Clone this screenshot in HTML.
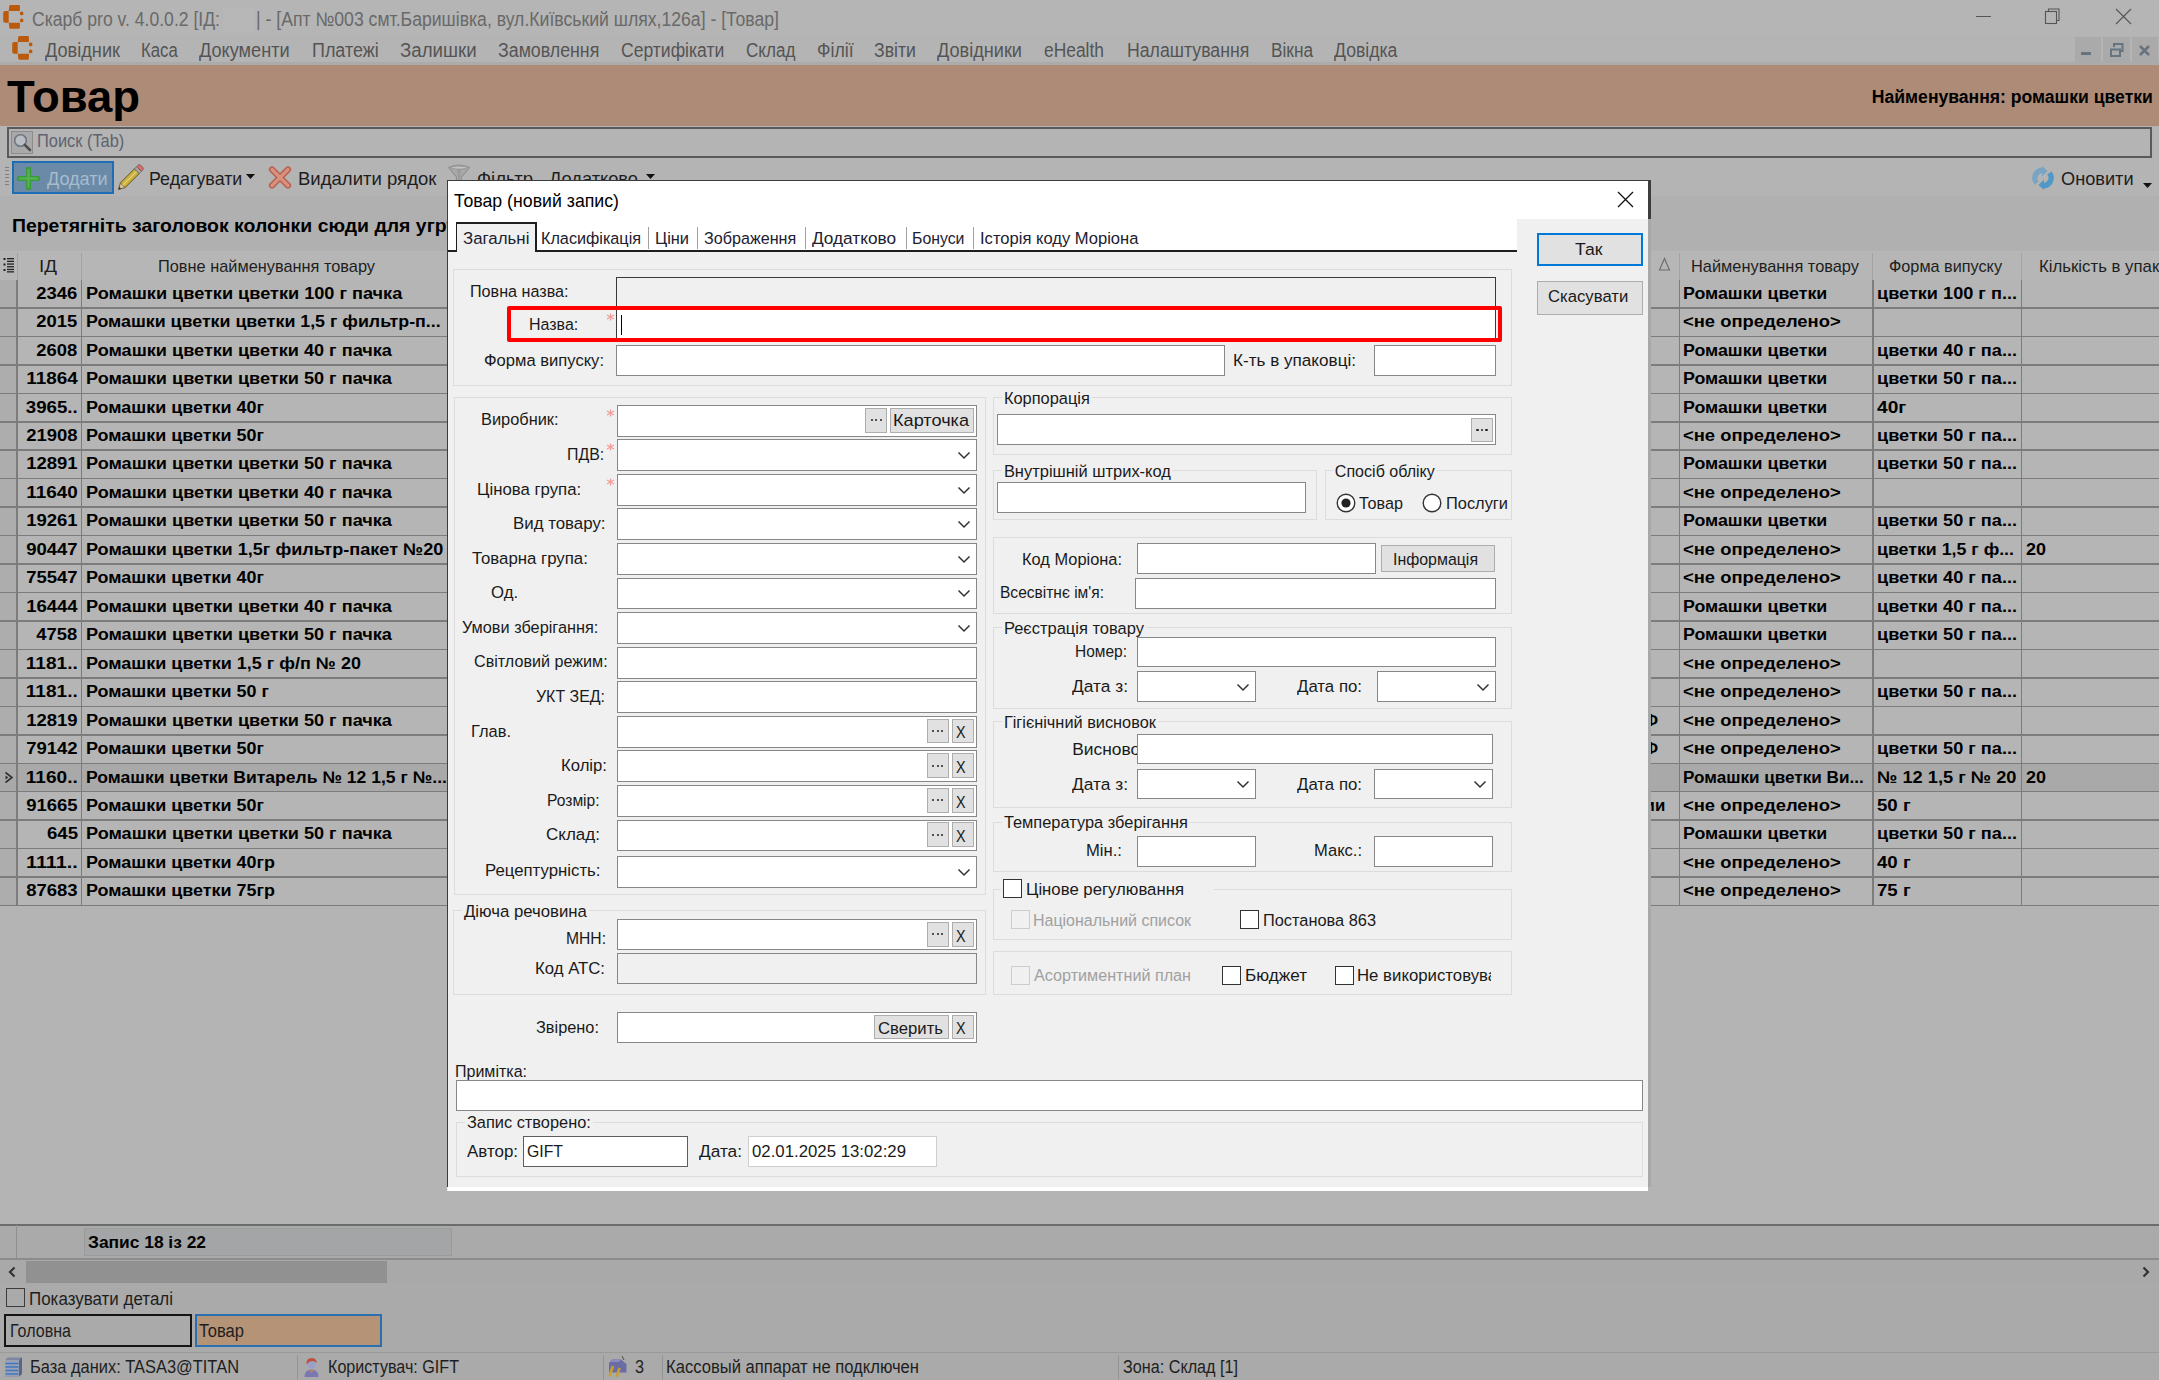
<!DOCTYPE html>
<html><head><meta charset="utf-8"><title>Товар</title>
<style>
html,body{margin:0;padding:0;}
body{width:2159px;height:1380px;overflow:hidden;position:relative;background:#b4b4b4;font-family:"Liberation Sans", sans-serif;}
.a{position:absolute;}
.t{white-space:nowrap;}
</style></head><body>
<div class="a" style="left:0px;top:0px;width:2159px;height:35px;background:#b5b5b5;"></div>
<svg class="a" style="left:2px;top:4px" width="24" height="26" viewBox="0 0 24 26"><g fill="#b95a0c"><path d="M7.3 2 Q7.3 0.9 8.6 0.9 H16.6 Q17.9 0.9 17.9 2 L17.9 6.9 H6.7 Z"/><path d="M6.7 6.9 V18.7 H3.2 Q1.2 18.7 1.2 16.7 V8.9 Q1.2 6.9 3.2 6.9 Z"/><path d="M6.7 18.7 H17.9 V23.6 Q17.9 24.8 16.6 24.8 H8.6 Q7.3 24.8 7.3 23.6 Z"/><rect x="17.9" y="7.4" width="3.5" height="3.9" rx="1.6"/><rect x="17.9" y="14.6" width="3.5" height="3.7" rx="1.6"/></g></svg>
<div class="a t" id="t1" style="top:10.00px;font-size:19.5px;line-height:19.5px;font-weight:normal;color:#696969;left:32px;transform:scaleX(0.9013);transform-origin:0 0;">Скарб pro v. 4.0.0.2 [ІД:</div>
<div class="a" style="left:223px;top:8px;width:31px;height:24px;background:#b7b7b7;"></div>
<div class="a t" id="t2" style="top:10.00px;font-size:19.5px;line-height:19.5px;font-weight:normal;color:#696969;left:256px;transform:scaleX(0.9039);transform-origin:0 0;">| - [Апт №003 смт.Баришівка, вул.Київський шлях,126а] - [Товар]</div>
<div class="a" style="left:1976px;top:16px;width:15px;height:1.2px;background:#555;"></div>
<svg class="a" style="left:2040px;top:6px" width="26" height="22" viewBox="0 0 26 22"><rect x="5.5" y="5.5" width="11" height="12" fill="none" stroke="#555" stroke-width="1.1"/><path d="M8.5 5.5 v-2.5 h10.5 v11.5 h-2.5" fill="none" stroke="#555" stroke-width="1.1"/></svg>
<svg class="a" style="left:2112px;top:5px" width="24" height="24" viewBox="0 0 24 24"><path d="M4 4 L19 19 M19 4 L4 19" stroke="#555" stroke-width="1.1"/></svg>
<div class="a" style="left:0px;top:35px;width:2159px;height:30px;background:#b4b4b4;"></div>
<div class="a" style="left:0px;top:62px;width:2159px;height:3px;background:#ababab;"></div>
<svg class="a" style="left:10.6px;top:35.1px" width="24" height="26" viewBox="0 0 24 26"><g fill="#b95a0c"><path d="M7.3 2 Q7.3 0.9 8.6 0.9 H16.6 Q17.9 0.9 17.9 2 L17.9 6.9 H6.7 Z"/><path d="M6.7 6.9 V18.7 H3.2 Q1.2 18.7 1.2 16.7 V8.9 Q1.2 6.9 3.2 6.9 Z"/><path d="M6.7 18.7 H17.9 V23.6 Q17.9 24.8 16.6 24.8 H8.6 Q7.3 24.8 7.3 23.6 Z"/><rect x="17.9" y="7.4" width="3.5" height="3.9" rx="1.6"/><rect x="17.9" y="14.6" width="3.5" height="3.7" rx="1.6"/></g></svg>
<div class="a t" id="t3" style="top:41.00px;font-size:19.5px;line-height:19.5px;font-weight:normal;color:#545454;left:45px;transform:scaleX(0.9311);transform-origin:0 0;">Довідник</div>
<div class="a t" id="t4" style="top:41.00px;font-size:19.5px;line-height:19.5px;font-weight:normal;color:#545454;left:141px;transform:scaleX(0.8572);transform-origin:0 0;">Каса</div>
<div class="a t" id="t5" style="top:41.00px;font-size:19.5px;line-height:19.5px;font-weight:normal;color:#545454;left:199.3px;transform:scaleX(0.9312);transform-origin:0 0;">Документи</div>
<div class="a t" id="t6" style="top:41.00px;font-size:19.5px;line-height:19.5px;font-weight:normal;color:#545454;left:312.3px;transform:scaleX(0.9196);transform-origin:0 0;">Платежі</div>
<div class="a t" id="t7" style="top:41.00px;font-size:19.5px;line-height:19.5px;font-weight:normal;color:#545454;left:400px;transform:scaleX(0.9591);transform-origin:0 0;">Залишки</div>
<div class="a t" id="t8" style="top:41.00px;font-size:19.5px;line-height:19.5px;font-weight:normal;color:#545454;left:497.7px;transform:scaleX(0.9117);transform-origin:0 0;">Замовлення</div>
<div class="a t" id="t9" style="top:41.00px;font-size:19.5px;line-height:19.5px;font-weight:normal;color:#545454;left:620.7px;transform:scaleX(0.9002);transform-origin:0 0;">Сертифікати</div>
<div class="a t" id="t10" style="top:41.00px;font-size:19.5px;line-height:19.5px;font-weight:normal;color:#545454;left:745.6px;transform:scaleX(0.8753);transform-origin:0 0;">Склад</div>
<div class="a t" id="t11" style="top:41.00px;font-size:19.5px;line-height:19.5px;font-weight:normal;color:#545454;left:816.5px;transform:scaleX(0.9107);transform-origin:0 0;">Філії</div>
<div class="a t" id="t12" style="top:41.00px;font-size:19.5px;line-height:19.5px;font-weight:normal;color:#545454;left:874px;transform:scaleX(0.9072);transform-origin:0 0;">Звіти</div>
<div class="a t" id="t13" style="top:41.00px;font-size:19.5px;line-height:19.5px;font-weight:normal;color:#545454;left:937px;transform:scaleX(0.9296);transform-origin:0 0;">Довідники</div>
<div class="a t" id="t14" style="top:41.00px;font-size:19.5px;line-height:19.5px;font-weight:normal;color:#545454;left:1044.4px;transform:scaleX(0.8926);transform-origin:0 0;">eHealth</div>
<div class="a t" id="t15" style="top:41.00px;font-size:19.5px;line-height:19.5px;font-weight:normal;color:#545454;left:1126.7px;transform:scaleX(0.9074);transform-origin:0 0;">Налаштування</div>
<div class="a t" id="t16" style="top:41.00px;font-size:19.5px;line-height:19.5px;font-weight:normal;color:#545454;left:1270.6px;transform:scaleX(0.8866);transform-origin:0 0;">Вікна</div>
<div class="a t" id="t17" style="top:41.00px;font-size:19.5px;line-height:19.5px;font-weight:normal;color:#545454;left:1334px;transform:scaleX(0.9037);transform-origin:0 0;">Довідка</div>
<div class="a" style="left:2074.5px;top:36.6px;width:26.7px;height:26.4px;background:#aaaaaa;"></div>
<div class="a" style="left:2103px;top:36.6px;width:26.7px;height:26.4px;background:#aaaaaa;"></div>
<div class="a" style="left:2131.5px;top:36.6px;width:26.7px;height:26.4px;background:#aaaaaa;"></div>
<div class="a" style="left:2081px;top:52px;width:10px;height:3px;background:#67737d;"></div>
<svg class="a" style="left:2103px;top:37px" width="27" height="26" viewBox="0 0 27 26"><rect x="8" y="12.5" width="9" height="6.5" fill="none" stroke="#67737d" stroke-width="2"/><path d="M11 10 v-3 h8.5 v7 h-2.5" fill="none" stroke="#67737d" stroke-width="2"/></svg>
<svg class="a" style="left:2131px;top:37px" width="27" height="26" viewBox="0 0 27 26"><path d="M9 9 L18 18 M18 9 L9 18" stroke="#67737d" stroke-width="2.6"/></svg>
<div class="a" style="left:0px;top:65px;width:2159px;height:61px;background:#ae8b77;"></div>
<div class="a t" id="t18" style="top:74.00px;font-size:45px;line-height:45px;font-weight:bold;color:#000;left:7px;transform:scaleX(1.0096);transform-origin:0 0;">Товар</div>
<div class="a t" id="t19" style="top:88.00px;font-size:18px;line-height:18px;font-weight:bold;color:#000;right:6.400000000000091px;transform:scaleX(0.9762);transform-origin:100% 0;">Найменування: ромашки цветки</div>
<div class="a" style="left:7.3px;top:126.5px;width:2145px;height:31px;border:2px solid #5a5a5a;box-sizing:border-box;"></div>
<div class="a" style="left:11px;top:130.7px;width:22.3px;height:23.3px;background:#a9a9a9;border:1px solid #8c8c8c;box-sizing:border-box;"></div>
<svg class="a" style="left:12px;top:132px" width="21" height="21" viewBox="0 0 21 21"><circle cx="8.5" cy="8.5" r="5.8" fill="#b9bdc4" stroke="#6e7680" stroke-width="1.6"/><path d="M12.8 12.8 L18 18" stroke="#4d4d4d" stroke-width="2.6" stroke-linecap="round"/></svg>
<div class="a t" id="t20" style="top:131.00px;font-size:19px;line-height:19px;font-weight:normal;color:#5f6270;left:36.7px;transform:scaleX(0.8625);transform-origin:0 0;">Поиск (Tab)</div>
<div class="a" style="left:4.5px;top:166.5px;width:4px;height:1.3px;background:#7e7e7e;"></div>
<div class="a" style="left:4.5px;top:170.0px;width:4px;height:1.3px;background:#7e7e7e;"></div>
<div class="a" style="left:4.5px;top:173.5px;width:4px;height:1.3px;background:#7e7e7e;"></div>
<div class="a" style="left:4.5px;top:177.0px;width:4px;height:1.3px;background:#7e7e7e;"></div>
<div class="a" style="left:4.5px;top:180.5px;width:4px;height:1.3px;background:#7e7e7e;"></div>
<div class="a" style="left:4.5px;top:184.0px;width:4px;height:1.3px;background:#7e7e7e;"></div>
<div class="a" style="left:11.8px;top:161px;width:102.2px;height:32.8px;background:#6a8aa8;border:2px solid #1f6db5;box-sizing:border-box;"></div>
<svg class="a" style="left:17px;top:167px" width="23" height="23" viewBox="0 0 23 23"><path d="M11.5 2 V21 M2 11.5 H21" stroke="#3a9a3a" stroke-width="5" stroke-linecap="round"/><path d="M11.5 3 V20 M3 11.5 H20" stroke="#53b353" stroke-width="2.4" stroke-linecap="round"/></svg>
<div class="a t" id="t21" style="top:169.00px;font-size:19px;line-height:19px;font-weight:normal;color:#a7bccd;left:46.7px;transform:scaleX(0.9499);transform-origin:0 0;">Додати</div>
<svg class="a" style="left:116px;top:163px" width="30" height="30" viewBox="0 0 30 30"><g transform="translate(14.5 14.5) rotate(-45)"><path d="M-17 0 L-11 -3.3 H9 V3.3 H-11 Z" fill="#d9c39a" stroke="#6e5a3a" stroke-width="0.9"/><path d="M-17 0 L-14.5 -1.4 V1.4 Z" fill="#333"/><rect x="-11" y="-3.3" width="20" height="6.6" fill="#c9b040" stroke="#6e6230" stroke-width="0.9"/><rect x="-11" y="-0.6" width="20" height="1.2" fill="#e3d070"/><rect x="9" y="-3.3" width="3" height="6.6" fill="#a8a8a8" stroke="#666" stroke-width="0.8"/><rect x="12" y="-3.3" width="3.8" height="6.6" rx="1.4" fill="#d07070" stroke="#8a4a4a" stroke-width="0.8"/></g></svg>
<div class="a t" id="t22" style="top:169.00px;font-size:19px;line-height:19px;font-weight:normal;color:#1e1e1e;left:149px;transform:scaleX(0.9384);transform-origin:0 0;">Редагувати</div>
<svg class="a" style="left:246px;top:174px" width="10" height="6" viewBox="0 0 10 6"><path d="M0 0 H9 L4.5 5 Z" fill="#111"/></svg>
<svg class="a" style="left:267px;top:165px" width="26" height="25" viewBox="0 0 26 25"><path d="M5 4.5 L21 20.5 M21 4.5 L5 20.5" stroke="#b8604e" stroke-width="6.2" stroke-linecap="round"/><path d="M5 4.5 L21 20.5 M21 4.5 L5 20.5" stroke="#d9907e" stroke-width="3.2" stroke-linecap="round"/></svg>
<div class="a t" id="t23" style="top:169.00px;font-size:19px;line-height:19px;font-weight:normal;color:#1e1e1e;left:298.3px;transform:scaleX(0.9757);transform-origin:0 0;">Видалити рядок</div>
<svg class="a" style="left:447px;top:164px" width="24" height="18" viewBox="0 0 24 18"><path d="M1.5 3.5 Q12 -1.5 22.5 3.5 L14.5 13 V18 H9.5 V13 Z" fill="#a9a9a9" stroke="#8f8f8f" stroke-width="1.1"/><ellipse cx="12" cy="3.6" rx="8" ry="1.6" fill="#c2c2c2" stroke="#8a8a8a" stroke-width="0.8"/><path d="M10.5 6 H13.5 L12.8 16 H11.2 Z" fill="#9a9a9a"/></svg>
<div class="a t" id="t24" style="top:169.00px;font-size:19px;line-height:19px;font-weight:normal;color:#1e1e1e;left:476.7px;transform:scaleX(0.9750);transform-origin:0 0;">Фільтр</div>
<div class="a t" id="t25" style="top:169.00px;font-size:19px;line-height:19px;font-weight:normal;color:#1e1e1e;left:549.3px;transform:scaleX(0.9599);transform-origin:0 0;">Додатково</div>
<svg class="a" style="left:646px;top:174px" width="10" height="6" viewBox="0 0 10 6"><path d="M0 0 H9 L4.5 5 Z" fill="#111"/></svg>
<svg class="a" style="left:2031px;top:166px" width="24" height="24" viewBox="0 0 24 24"><path d="M12 1.5 A10.5 10.5 0 0 0 3.5 18.5 L7.8 15.5 A5.2 5.2 0 0 1 11 7 V10.5 L16.5 5 L11 0 V1.5 Z" fill="#7aa4c4"/><path d="M12 22.5 A10.5 10.5 0 0 0 20.5 5.5 L16.2 8.5 A5.2 5.2 0 0 1 13 17 V13.5 L7.5 19 L13 24 V22.5 Z" fill="#4f98c8"/></svg>
<div class="a t" id="t26" style="top:169.00px;font-size:19px;line-height:19px;font-weight:normal;color:#1e1e1e;left:2061px;transform:scaleX(0.9568);transform-origin:0 0;">Оновити</div>
<svg class="a" style="left:2143px;top:183px" width="10" height="6" viewBox="0 0 10 6"><path d="M0 0 H9 L4.5 5 Z" fill="#111"/></svg>
<div class="a" style="left:0px;top:196px;width:2159px;height:54.80000000000001px;background:#b0b0b0;"></div>
<div class="a t" id="t27" style="top:217.00px;font-size:18.2px;line-height:18.2px;font-weight:bold;color:#000;left:12.3px;transform:scaleX(1.0678);transform-origin:0 0;">Перетягніть заголовок колонки сюди для угруповання</div>
<div class="a" style="left:0px;top:250.8px;width:2159px;height:28.80000000000001px;background:#b6b6b6;"></div>
<div class="a" style="left:16.5px;top:252.8px;width:1.3px;height:26.80000000000001px;background:#a3a3a3;"></div>
<div class="a" style="left:80.9px;top:252.8px;width:1.3px;height:26.80000000000001px;background:#a3a3a3;"></div>
<div class="a" style="left:1679.0px;top:252.8px;width:1.3px;height:26.80000000000001px;background:#a3a3a3;"></div>
<div class="a" style="left:1872.2px;top:252.8px;width:1.3px;height:26.80000000000001px;background:#a3a3a3;"></div>
<div class="a" style="left:2020.7px;top:252.8px;width:1.3px;height:26.80000000000001px;background:#a3a3a3;"></div>
<svg class="a" style="left:3px;top:257px" width="12" height="16" viewBox="0 0 12 16"><g fill="#222"><rect x="0.5" y="1" width="2" height="2"/><rect x="0.5" y="6.5" width="2" height="2"/><rect x="0.5" y="12" width="2" height="2"/><rect x="4" y="1" width="7" height="1.3"/><rect x="4" y="3.7" width="7" height="1.3"/><rect x="4" y="6.4" width="7" height="1.3"/><rect x="4" y="9.1" width="7" height="1.3"/><rect x="4" y="11.8" width="7" height="1.3"/><rect x="4" y="14.2" width="7" height="1.3"/></g></svg>
<div class="a t" id="t28" style="top:258.00px;font-size:17px;line-height:17px;font-weight:normal;color:#1e1e1e;left:39px;transform:scaleX(1.1077);transform-origin:0 0;">ІД</div>
<div class="a t" id="t29" style="top:258.00px;font-size:17px;line-height:17px;font-weight:normal;color:#1e1e1e;left:157.8px;transform:scaleX(0.9612);transform-origin:0 0;">Повне найменування товару</div>
<svg class="a" style="left:1658px;top:257px" width="13" height="15" viewBox="0 0 13 15"><path d="M6.5 1.5 L11.5 13 H1.5 Z" fill="none" stroke="#6a6a6a" stroke-width="1.1"/></svg>
<div class="a t" id="t30" style="top:258.00px;font-size:17px;line-height:17px;font-weight:normal;color:#1e1e1e;left:1690.8px;transform:scaleX(0.9634);transform-origin:0 0;">Найменування товару</div>
<div class="a t" id="t31" style="top:258.00px;font-size:17px;line-height:17px;font-weight:normal;color:#1e1e1e;left:1889px;transform:scaleX(0.9546);transform-origin:0 0;">Форма випуску</div>
<div class="a t" id="t32" style="top:258.00px;font-size:17px;line-height:17px;font-weight:normal;color:#1e1e1e;left:2038.5px;transform:scaleX(0.9864);transform-origin:0 0;">Кількість в упаковці</div>
<div class="a" style="left:0px;top:279.6px;width:2159px;height:28.46px;background:#b5b5b5;"></div>
<div class="a" style="left:0px;top:279.6px;width:17px;height:28.46px;background:#adadad;"></div>
<div class="a" style="left:0px;top:308.06px;width:2159px;height:28.46px;background:#b5b5b5;"></div>
<div class="a" style="left:0px;top:308.06px;width:17px;height:28.46px;background:#adadad;"></div>
<div class="a" style="left:0px;top:336.52000000000004px;width:2159px;height:28.46px;background:#b5b5b5;"></div>
<div class="a" style="left:0px;top:336.52000000000004px;width:17px;height:28.46px;background:#adadad;"></div>
<div class="a" style="left:0px;top:364.98px;width:2159px;height:28.46px;background:#b5b5b5;"></div>
<div class="a" style="left:0px;top:364.98px;width:17px;height:28.46px;background:#adadad;"></div>
<div class="a" style="left:0px;top:393.44000000000005px;width:2159px;height:28.46px;background:#b5b5b5;"></div>
<div class="a" style="left:0px;top:393.44000000000005px;width:17px;height:28.46px;background:#adadad;"></div>
<div class="a" style="left:0px;top:421.90000000000003px;width:2159px;height:28.46px;background:#b5b5b5;"></div>
<div class="a" style="left:0px;top:421.90000000000003px;width:17px;height:28.46px;background:#adadad;"></div>
<div class="a" style="left:0px;top:450.36px;width:2159px;height:28.46px;background:#b5b5b5;"></div>
<div class="a" style="left:0px;top:450.36px;width:17px;height:28.46px;background:#adadad;"></div>
<div class="a" style="left:0px;top:478.82000000000005px;width:2159px;height:28.46px;background:#b5b5b5;"></div>
<div class="a" style="left:0px;top:478.82000000000005px;width:17px;height:28.46px;background:#adadad;"></div>
<div class="a" style="left:0px;top:507.28000000000003px;width:2159px;height:28.46px;background:#b5b5b5;"></div>
<div class="a" style="left:0px;top:507.28000000000003px;width:17px;height:28.46px;background:#adadad;"></div>
<div class="a" style="left:0px;top:535.74px;width:2159px;height:28.46px;background:#b5b5b5;"></div>
<div class="a" style="left:0px;top:535.74px;width:17px;height:28.46px;background:#adadad;"></div>
<div class="a" style="left:0px;top:564.2px;width:2159px;height:28.46px;background:#b5b5b5;"></div>
<div class="a" style="left:0px;top:564.2px;width:17px;height:28.46px;background:#adadad;"></div>
<div class="a" style="left:0px;top:592.6600000000001px;width:2159px;height:28.46px;background:#b5b5b5;"></div>
<div class="a" style="left:0px;top:592.6600000000001px;width:17px;height:28.46px;background:#adadad;"></div>
<div class="a" style="left:0px;top:621.12px;width:2159px;height:28.46px;background:#b5b5b5;"></div>
<div class="a" style="left:0px;top:621.12px;width:17px;height:28.46px;background:#adadad;"></div>
<div class="a" style="left:0px;top:649.58px;width:2159px;height:28.46px;background:#b5b5b5;"></div>
<div class="a" style="left:0px;top:649.58px;width:17px;height:28.46px;background:#adadad;"></div>
<div class="a" style="left:0px;top:678.04px;width:2159px;height:28.46px;background:#b5b5b5;"></div>
<div class="a" style="left:0px;top:678.04px;width:17px;height:28.46px;background:#adadad;"></div>
<div class="a" style="left:0px;top:706.5px;width:2159px;height:28.46px;background:#b5b5b5;"></div>
<div class="a" style="left:0px;top:706.5px;width:17px;height:28.46px;background:#adadad;"></div>
<div class="a" style="left:0px;top:734.96px;width:2159px;height:28.46px;background:#b5b5b5;"></div>
<div class="a" style="left:0px;top:734.96px;width:17px;height:28.46px;background:#adadad;"></div>
<div class="a" style="left:0px;top:763.4200000000001px;width:2159px;height:28.46px;background:#a9a9a9;"></div>
<div class="a" style="left:0px;top:763.4200000000001px;width:17px;height:28.46px;background:#a9a9a9;"></div>
<div class="a" style="left:0px;top:791.88px;width:2159px;height:28.46px;background:#b5b5b5;"></div>
<div class="a" style="left:0px;top:791.88px;width:17px;height:28.46px;background:#adadad;"></div>
<div class="a" style="left:0px;top:820.34px;width:2159px;height:28.46px;background:#b5b5b5;"></div>
<div class="a" style="left:0px;top:820.34px;width:17px;height:28.46px;background:#adadad;"></div>
<div class="a" style="left:0px;top:848.8000000000001px;width:2159px;height:28.46px;background:#b5b5b5;"></div>
<div class="a" style="left:0px;top:848.8000000000001px;width:17px;height:28.46px;background:#adadad;"></div>
<div class="a" style="left:0px;top:877.26px;width:2159px;height:28.46px;background:#b5b5b5;"></div>
<div class="a" style="left:0px;top:877.26px;width:17px;height:28.46px;background:#adadad;"></div>
<div class="a t" id="t33" style="top:286.00px;font-size:16.8px;line-height:16.8px;font-weight:bold;color:#000;right:2081.2px;transform:scaleX(1.0979);transform-origin:100% 0;">2346</div>
<div class="a t" id="t34" style="top:286.00px;font-size:16.8px;line-height:16.8px;font-weight:bold;color:#000;left:86.1px;transform:scaleX(1.0803);transform-origin:0 0;">Ромашки цветки цветки 100 г пачка</div>
<div class="a t" id="t35" style="top:286.00px;font-size:16.8px;line-height:16.8px;font-weight:bold;color:#000;left:1683.3px;transform:scaleX(1.0598);transform-origin:0 0;">Ромашки цветки</div>
<div class="a t" id="t36" style="top:286.00px;font-size:16.8px;line-height:16.8px;font-weight:bold;color:#000;left:1877.4px;transform:scaleX(1.0806);transform-origin:0 0;">цветки 100 г п...</div>
<div class="a" style="left:0px;top:307.16px;width:2159px;height:1.5px;background:#7c7c7c;"></div>
<div class="a t" id="t37" style="top:314.00px;font-size:16.8px;line-height:16.8px;font-weight:bold;color:#000;right:2081.2px;transform:scaleX(1.0979);transform-origin:100% 0;">2015</div>
<div class="a t" id="t38" style="top:314.00px;font-size:16.8px;line-height:16.8px;font-weight:bold;color:#000;left:86.1px;transform:scaleX(1.0611);transform-origin:0 0;">Ромашки цветки цветки 1,5 г фильтр-п...</div>
<div class="a t" id="t39" style="top:314.00px;font-size:16.8px;line-height:16.8px;font-weight:bold;color:#000;left:1683.3px;transform:scaleX(1.0962);transform-origin:0 0;">&lt;не определено&gt;</div>
<div class="a" style="left:0px;top:335.62px;width:2159px;height:1.5px;background:#7c7c7c;"></div>
<div class="a t" id="t40" style="top:343.00px;font-size:16.8px;line-height:16.8px;font-weight:bold;color:#000;right:2081.2px;transform:scaleX(1.0979);transform-origin:100% 0;">2608</div>
<div class="a t" id="t41" style="top:343.00px;font-size:16.8px;line-height:16.8px;font-weight:bold;color:#000;left:86.1px;transform:scaleX(1.0793);transform-origin:0 0;">Ромашки цветки цветки 40 г пачка</div>
<div class="a t" id="t42" style="top:343.00px;font-size:16.8px;line-height:16.8px;font-weight:bold;color:#000;left:1683.3px;transform:scaleX(1.0598);transform-origin:0 0;">Ромашки цветки</div>
<div class="a t" id="t43" style="top:343.00px;font-size:16.8px;line-height:16.8px;font-weight:bold;color:#000;left:1877.4px;transform:scaleX(1.0806);transform-origin:0 0;">цветки 40 г па...</div>
<div class="a" style="left:0px;top:364.08000000000004px;width:2159px;height:1.5px;background:#7c7c7c;"></div>
<div class="a t" id="t44" style="top:371.00px;font-size:16.8px;line-height:16.8px;font-weight:bold;color:#000;right:2081.2px;transform:scaleX(1.1257);transform-origin:100% 0;">11864</div>
<div class="a t" id="t45" style="top:371.00px;font-size:16.8px;line-height:16.8px;font-weight:bold;color:#000;left:86.1px;transform:scaleX(1.0793);transform-origin:0 0;">Ромашки цветки цветки 50 г пачка</div>
<div class="a t" id="t46" style="top:371.00px;font-size:16.8px;line-height:16.8px;font-weight:bold;color:#000;left:1683.3px;transform:scaleX(1.0598);transform-origin:0 0;">Ромашки цветки</div>
<div class="a t" id="t47" style="top:371.00px;font-size:16.8px;line-height:16.8px;font-weight:bold;color:#000;left:1877.4px;transform:scaleX(1.0806);transform-origin:0 0;">цветки 50 г па...</div>
<div class="a" style="left:0px;top:392.54px;width:2159px;height:1.5px;background:#7c7c7c;"></div>
<div class="a t" id="t48" style="top:400.00px;font-size:16.8px;line-height:16.8px;font-weight:bold;color:#000;right:2081.2px;transform:scaleX(1.1120);transform-origin:100% 0;">3965..</div>
<div class="a t" id="t49" style="top:400.00px;font-size:16.8px;line-height:16.8px;font-weight:bold;color:#000;left:86.1px;transform:scaleX(1.0687);transform-origin:0 0;">Ромашки цветки 40г</div>
<div class="a t" id="t50" style="top:400.00px;font-size:16.8px;line-height:16.8px;font-weight:bold;color:#000;left:1683.3px;transform:scaleX(1.0598);transform-origin:0 0;">Ромашки цветки</div>
<div class="a t" id="t51" style="top:400.00px;font-size:16.8px;line-height:16.8px;font-weight:bold;color:#000;left:1877.4px;transform:scaleX(1.1420);transform-origin:0 0;">40г</div>
<div class="a" style="left:0px;top:421.00000000000006px;width:2159px;height:1.5px;background:#7c7c7c;"></div>
<div class="a t" id="t52" style="top:428.00px;font-size:16.8px;line-height:16.8px;font-weight:bold;color:#000;right:2081.2px;transform:scaleX(1.1034);transform-origin:100% 0;">21908</div>
<div class="a t" id="t53" style="top:428.00px;font-size:16.8px;line-height:16.8px;font-weight:bold;color:#000;left:86.1px;transform:scaleX(1.0687);transform-origin:0 0;">Ромашки цветки 50г</div>
<div class="a t" id="t54" style="top:428.00px;font-size:16.8px;line-height:16.8px;font-weight:bold;color:#000;left:1683.3px;transform:scaleX(1.0962);transform-origin:0 0;">&lt;не определено&gt;</div>
<div class="a t" id="t55" style="top:428.00px;font-size:16.8px;line-height:16.8px;font-weight:bold;color:#000;left:1877.4px;transform:scaleX(1.0806);transform-origin:0 0;">цветки 50 г па...</div>
<div class="a" style="left:0px;top:449.46000000000004px;width:2159px;height:1.5px;background:#7c7c7c;"></div>
<div class="a t" id="t56" style="top:456.00px;font-size:16.8px;line-height:16.8px;font-weight:bold;color:#000;right:2081.2px;transform:scaleX(1.1034);transform-origin:100% 0;">12891</div>
<div class="a t" id="t57" style="top:456.00px;font-size:16.8px;line-height:16.8px;font-weight:bold;color:#000;left:86.1px;transform:scaleX(1.0793);transform-origin:0 0;">Ромашки цветки цветки 50 г пачка</div>
<div class="a t" id="t58" style="top:456.00px;font-size:16.8px;line-height:16.8px;font-weight:bold;color:#000;left:1683.3px;transform:scaleX(1.0598);transform-origin:0 0;">Ромашки цветки</div>
<div class="a t" id="t59" style="top:456.00px;font-size:16.8px;line-height:16.8px;font-weight:bold;color:#000;left:1877.4px;transform:scaleX(1.0806);transform-origin:0 0;">цветки 50 г па...</div>
<div class="a" style="left:0px;top:477.92px;width:2159px;height:1.5px;background:#7c7c7c;"></div>
<div class="a t" id="t60" style="top:485.00px;font-size:16.8px;line-height:16.8px;font-weight:bold;color:#000;right:2081.2px;transform:scaleX(1.1257);transform-origin:100% 0;">11640</div>
<div class="a t" id="t61" style="top:485.00px;font-size:16.8px;line-height:16.8px;font-weight:bold;color:#000;left:86.1px;transform:scaleX(1.0793);transform-origin:0 0;">Ромашки цветки цветки 40 г пачка</div>
<div class="a t" id="t62" style="top:485.00px;font-size:16.8px;line-height:16.8px;font-weight:bold;color:#000;left:1683.3px;transform:scaleX(1.0962);transform-origin:0 0;">&lt;не определено&gt;</div>
<div class="a" style="left:0px;top:506.38000000000005px;width:2159px;height:1.5px;background:#7c7c7c;"></div>
<div class="a t" id="t63" style="top:513.00px;font-size:16.8px;line-height:16.8px;font-weight:bold;color:#000;right:2081.2px;transform:scaleX(1.1034);transform-origin:100% 0;">19261</div>
<div class="a t" id="t64" style="top:513.00px;font-size:16.8px;line-height:16.8px;font-weight:bold;color:#000;left:86.1px;transform:scaleX(1.0793);transform-origin:0 0;">Ромашки цветки цветки 50 г пачка</div>
<div class="a t" id="t65" style="top:513.00px;font-size:16.8px;line-height:16.8px;font-weight:bold;color:#000;left:1683.3px;transform:scaleX(1.0598);transform-origin:0 0;">Ромашки цветки</div>
<div class="a t" id="t66" style="top:513.00px;font-size:16.8px;line-height:16.8px;font-weight:bold;color:#000;left:1877.4px;transform:scaleX(1.0806);transform-origin:0 0;">цветки 50 г па...</div>
<div class="a" style="left:0px;top:534.84px;width:2159px;height:1.5px;background:#7c7c7c;"></div>
<div class="a t" id="t67" style="top:542.00px;font-size:16.8px;line-height:16.8px;font-weight:bold;color:#000;right:2081.2px;transform:scaleX(1.1034);transform-origin:100% 0;">90447</div>
<div class="a t" id="t68" style="top:542.00px;font-size:16.8px;line-height:16.8px;font-weight:bold;color:#000;left:86.1px;transform:scaleX(1.0775);transform-origin:0 0;">Ромашки цветки 1,5г фильтр-пакет №20</div>
<div class="a t" id="t69" style="top:542.00px;font-size:16.8px;line-height:16.8px;font-weight:bold;color:#000;left:1683.3px;transform:scaleX(1.0962);transform-origin:0 0;">&lt;не определено&gt;</div>
<div class="a t" id="t70" style="top:542.00px;font-size:16.8px;line-height:16.8px;font-weight:bold;color:#000;left:1877.4px;transform:scaleX(1.0584);transform-origin:0 0;">цветки 1,5 г ф...</div>
<div class="a t" id="t71" style="top:542.00px;font-size:16.8px;line-height:16.8px;font-weight:bold;color:#000;left:2025.6px;transform:scaleX(1.0711);transform-origin:0 0;">20</div>
<div class="a" style="left:0px;top:563.3000000000001px;width:2159px;height:1.5px;background:#7c7c7c;"></div>
<div class="a t" id="t72" style="top:570.00px;font-size:16.8px;line-height:16.8px;font-weight:bold;color:#000;right:2081.2px;transform:scaleX(1.1034);transform-origin:100% 0;">75547</div>
<div class="a t" id="t73" style="top:570.00px;font-size:16.8px;line-height:16.8px;font-weight:bold;color:#000;left:86.1px;transform:scaleX(1.0687);transform-origin:0 0;">Ромашки цветки 40г</div>
<div class="a t" id="t74" style="top:570.00px;font-size:16.8px;line-height:16.8px;font-weight:bold;color:#000;left:1683.3px;transform:scaleX(1.0962);transform-origin:0 0;">&lt;не определено&gt;</div>
<div class="a t" id="t75" style="top:570.00px;font-size:16.8px;line-height:16.8px;font-weight:bold;color:#000;left:1877.4px;transform:scaleX(1.0806);transform-origin:0 0;">цветки 40 г па...</div>
<div class="a" style="left:0px;top:591.7600000000001px;width:2159px;height:1.5px;background:#7c7c7c;"></div>
<div class="a t" id="t76" style="top:599.00px;font-size:16.8px;line-height:16.8px;font-weight:bold;color:#000;right:2081.2px;transform:scaleX(1.1034);transform-origin:100% 0;">16444</div>
<div class="a t" id="t77" style="top:599.00px;font-size:16.8px;line-height:16.8px;font-weight:bold;color:#000;left:86.1px;transform:scaleX(1.0793);transform-origin:0 0;">Ромашки цветки цветки 40 г пачка</div>
<div class="a t" id="t78" style="top:599.00px;font-size:16.8px;line-height:16.8px;font-weight:bold;color:#000;left:1683.3px;transform:scaleX(1.0598);transform-origin:0 0;">Ромашки цветки</div>
<div class="a t" id="t79" style="top:599.00px;font-size:16.8px;line-height:16.8px;font-weight:bold;color:#000;left:1877.4px;transform:scaleX(1.0806);transform-origin:0 0;">цветки 40 г па...</div>
<div class="a" style="left:0px;top:620.2200000000001px;width:2159px;height:1.5px;background:#7c7c7c;"></div>
<div class="a t" id="t80" style="top:627.00px;font-size:16.8px;line-height:16.8px;font-weight:bold;color:#000;right:2081.2px;transform:scaleX(1.0979);transform-origin:100% 0;">4758</div>
<div class="a t" id="t81" style="top:627.00px;font-size:16.8px;line-height:16.8px;font-weight:bold;color:#000;left:86.1px;transform:scaleX(1.0793);transform-origin:0 0;">Ромашки цветки цветки 50 г пачка</div>
<div class="a t" id="t82" style="top:627.00px;font-size:16.8px;line-height:16.8px;font-weight:bold;color:#000;left:1683.3px;transform:scaleX(1.0598);transform-origin:0 0;">Ромашки цветки</div>
<div class="a t" id="t83" style="top:627.00px;font-size:16.8px;line-height:16.8px;font-weight:bold;color:#000;left:1877.4px;transform:scaleX(1.0806);transform-origin:0 0;">цветки 50 г па...</div>
<div class="a" style="left:0px;top:648.6800000000001px;width:2159px;height:1.5px;background:#7c7c7c;"></div>
<div class="a t" id="t84" style="top:656.00px;font-size:16.8px;line-height:16.8px;font-weight:bold;color:#000;right:2081.2px;transform:scaleX(1.1348);transform-origin:100% 0;">1181..</div>
<div class="a t" id="t85" style="top:656.00px;font-size:16.8px;line-height:16.8px;font-weight:bold;color:#000;left:86.1px;transform:scaleX(1.0711);transform-origin:0 0;">Ромашки цветки 1,5 г ф/п № 20</div>
<div class="a t" id="t86" style="top:656.00px;font-size:16.8px;line-height:16.8px;font-weight:bold;color:#000;left:1683.3px;transform:scaleX(1.0962);transform-origin:0 0;">&lt;не определено&gt;</div>
<div class="a" style="left:0px;top:677.1400000000001px;width:2159px;height:1.5px;background:#7c7c7c;"></div>
<div class="a t" id="t87" style="top:684.00px;font-size:16.8px;line-height:16.8px;font-weight:bold;color:#000;right:2081.2px;transform:scaleX(1.1348);transform-origin:100% 0;">1181..</div>
<div class="a t" id="t88" style="top:684.00px;font-size:16.8px;line-height:16.8px;font-weight:bold;color:#000;left:86.1px;transform:scaleX(1.0687);transform-origin:0 0;">Ромашки цветки 50 г</div>
<div class="a t" id="t89" style="top:684.00px;font-size:16.8px;line-height:16.8px;font-weight:bold;color:#000;left:1683.3px;transform:scaleX(1.0962);transform-origin:0 0;">&lt;не определено&gt;</div>
<div class="a t" id="t90" style="top:684.00px;font-size:16.8px;line-height:16.8px;font-weight:bold;color:#000;left:1877.4px;transform:scaleX(1.0806);transform-origin:0 0;">цветки 50 г па...</div>
<div class="a" style="left:0px;top:705.6px;width:2159px;height:1.5px;background:#7c7c7c;"></div>
<div class="a t" id="t91" style="top:713.00px;font-size:16.8px;line-height:16.8px;font-weight:bold;color:#000;right:2081.2px;transform:scaleX(1.1034);transform-origin:100% 0;">12819</div>
<div class="a t" id="t92" style="top:713.00px;font-size:16.8px;line-height:16.8px;font-weight:bold;color:#000;left:86.1px;transform:scaleX(1.0793);transform-origin:0 0;">Ромашки цветки цветки 50 г пачка</div>
<div class="a t" id="t93" style="top:713.00px;font-size:16.8px;line-height:16.8px;font-weight:bold;color:#000;left:1683.3px;transform:scaleX(1.0962);transform-origin:0 0;">&lt;не определено&gt;</div>
<div class="a t" id="t94" style="top:713.00px;font-size:16.8px;line-height:16.8px;font-weight:bold;color:#000;right:501px;">Ф</div>
<div class="a" style="left:0px;top:734.0600000000001px;width:2159px;height:1.5px;background:#7c7c7c;"></div>
<div class="a t" id="t95" style="top:741.00px;font-size:16.8px;line-height:16.8px;font-weight:bold;color:#000;right:2081.2px;transform:scaleX(1.1034);transform-origin:100% 0;">79142</div>
<div class="a t" id="t96" style="top:741.00px;font-size:16.8px;line-height:16.8px;font-weight:bold;color:#000;left:86.1px;transform:scaleX(1.0687);transform-origin:0 0;">Ромашки цветки 50г</div>
<div class="a t" id="t97" style="top:741.00px;font-size:16.8px;line-height:16.8px;font-weight:bold;color:#000;left:1683.3px;transform:scaleX(1.0962);transform-origin:0 0;">&lt;не определено&gt;</div>
<div class="a t" id="t98" style="top:741.00px;font-size:16.8px;line-height:16.8px;font-weight:bold;color:#000;left:1877.4px;transform:scaleX(1.0806);transform-origin:0 0;">цветки 50 г па...</div>
<div class="a t" id="t99" style="top:741.00px;font-size:16.8px;line-height:16.8px;font-weight:bold;color:#000;right:501px;">Ф</div>
<div class="a" style="left:0px;top:762.5200000000001px;width:2159px;height:1.5px;background:#7c7c7c;"></div>
<div class="a t" id="t100" style="top:770.00px;font-size:16.8px;line-height:16.8px;font-weight:bold;color:#000;right:2081.2px;transform:scaleX(1.1348);transform-origin:100% 0;">1160..</div>
<div class="a t" id="t101" style="top:770.00px;font-size:16.8px;line-height:16.8px;font-weight:bold;color:#000;left:86.1px;transform:scaleX(1.0459);transform-origin:0 0;">Ромашки цветки Витарель № 12 1,5 г №...</div>
<div class="a t" id="t102" style="top:770.00px;font-size:16.8px;line-height:16.8px;font-weight:bold;color:#000;left:1683.3px;transform:scaleX(1.0195);transform-origin:0 0;">Ромашки цветки Ви...</div>
<div class="a t" id="t103" style="top:770.00px;font-size:16.8px;line-height:16.8px;font-weight:bold;color:#000;left:1877.4px;transform:scaleX(1.0867);transform-origin:0 0;">№ 12 1,5 г № 20</div>
<div class="a t" id="t104" style="top:770.00px;font-size:16.8px;line-height:16.8px;font-weight:bold;color:#000;left:2025.6px;transform:scaleX(1.0711);transform-origin:0 0;">20</div>
<svg class="a" style="left:4px;top:771.4px" width="10" height="13" viewBox="0 0 10 13"><path d="M1.5 1.5 L8 6.5 L1.5 11.5" fill="none" stroke="#333" stroke-width="1.6"/><path d="M1.5 4.5 L4.5 6.5 L1.5 8.5 Z" fill="#333"/></svg>
<div class="a" style="left:0px;top:790.9800000000001px;width:2159px;height:1.5px;background:#7c7c7c;"></div>
<div class="a t" id="t105" style="top:798.00px;font-size:16.8px;line-height:16.8px;font-weight:bold;color:#000;right:2081.2px;transform:scaleX(1.1034);transform-origin:100% 0;">91665</div>
<div class="a t" id="t106" style="top:798.00px;font-size:16.8px;line-height:16.8px;font-weight:bold;color:#000;left:86.1px;transform:scaleX(1.0687);transform-origin:0 0;">Ромашки цветки 50г</div>
<div class="a t" id="t107" style="top:798.00px;font-size:16.8px;line-height:16.8px;font-weight:bold;color:#000;left:1683.3px;transform:scaleX(1.0962);transform-origin:0 0;">&lt;не определено&gt;</div>
<div class="a t" id="t108" style="top:798.00px;font-size:16.8px;line-height:16.8px;font-weight:bold;color:#000;left:1877.4px;transform:scaleX(1.1112);transform-origin:0 0;">50 г</div>
<div class="a t" id="t109" style="top:798.00px;font-size:16.8px;line-height:16.8px;font-weight:bold;color:#000;right:493.79999999999995px;">ии</div>
<div class="a" style="left:0px;top:819.44px;width:2159px;height:1.5px;background:#7c7c7c;"></div>
<div class="a t" id="t110" style="top:826.00px;font-size:16.8px;line-height:16.8px;font-weight:bold;color:#000;right:2081.2px;transform:scaleX(1.1071);transform-origin:100% 0;">645</div>
<div class="a t" id="t111" style="top:826.00px;font-size:16.8px;line-height:16.8px;font-weight:bold;color:#000;left:86.1px;transform:scaleX(1.0793);transform-origin:0 0;">Ромашки цветки цветки 50 г пачка</div>
<div class="a t" id="t112" style="top:826.00px;font-size:16.8px;line-height:16.8px;font-weight:bold;color:#000;left:1683.3px;transform:scaleX(1.0598);transform-origin:0 0;">Ромашки цветки</div>
<div class="a t" id="t113" style="top:826.00px;font-size:16.8px;line-height:16.8px;font-weight:bold;color:#000;left:1877.4px;transform:scaleX(1.0806);transform-origin:0 0;">цветки 50 г па...</div>
<div class="a" style="left:0px;top:847.9000000000001px;width:2159px;height:1.5px;background:#7c7c7c;"></div>
<div class="a t" id="t114" style="top:855.00px;font-size:16.8px;line-height:16.8px;font-weight:bold;color:#000;right:2081.2px;transform:scaleX(1.1825);transform-origin:100% 0;">1111..</div>
<div class="a t" id="t115" style="top:855.00px;font-size:16.8px;line-height:16.8px;font-weight:bold;color:#000;left:86.1px;transform:scaleX(1.0689);transform-origin:0 0;">Ромашки цветки 40гр</div>
<div class="a t" id="t116" style="top:855.00px;font-size:16.8px;line-height:16.8px;font-weight:bold;color:#000;left:1683.3px;transform:scaleX(1.0962);transform-origin:0 0;">&lt;не определено&gt;</div>
<div class="a t" id="t117" style="top:855.00px;font-size:16.8px;line-height:16.8px;font-weight:bold;color:#000;left:1877.4px;transform:scaleX(1.1112);transform-origin:0 0;">40 г</div>
<div class="a" style="left:0px;top:876.3600000000001px;width:2159px;height:1.5px;background:#7c7c7c;"></div>
<div class="a t" id="t118" style="top:883.00px;font-size:16.8px;line-height:16.8px;font-weight:bold;color:#000;right:2081.2px;transform:scaleX(1.1034);transform-origin:100% 0;">87683</div>
<div class="a t" id="t119" style="top:883.00px;font-size:16.8px;line-height:16.8px;font-weight:bold;color:#000;left:86.1px;transform:scaleX(1.0689);transform-origin:0 0;">Ромашки цветки 75гр</div>
<div class="a t" id="t120" style="top:883.00px;font-size:16.8px;line-height:16.8px;font-weight:bold;color:#000;left:1683.3px;transform:scaleX(1.0962);transform-origin:0 0;">&lt;не определено&gt;</div>
<div class="a t" id="t121" style="top:883.00px;font-size:16.8px;line-height:16.8px;font-weight:bold;color:#000;left:1877.4px;transform:scaleX(1.1112);transform-origin:0 0;">75 г</div>
<div class="a" style="left:0px;top:904.82px;width:2159px;height:1.5px;background:#7c7c7c;"></div>
<div class="a" style="left:16.400000000000002px;top:279.6px;width:1.5px;height:626.12px;background:#7c7c7c;"></div>
<div class="a" style="left:80.8px;top:279.6px;width:1.5px;height:626.12px;background:#7c7c7c;"></div>
<div class="a" style="left:1678.8999999999999px;top:279.6px;width:1.5px;height:626.12px;background:#7c7c7c;"></div>
<div class="a" style="left:1872.1px;top:279.6px;width:1.5px;height:626.12px;background:#7c7c7c;"></div>
<div class="a" style="left:2020.6px;top:279.6px;width:1.5px;height:626.12px;background:#7c7c7c;"></div>
<div class="a" style="left:0px;top:905.72px;width:2159px;height:318.28px;background:#b4b4b4;"></div>
<div class="a" style="left:0px;top:1223.8px;width:2159px;height:2px;background:#6c6c6c;"></div>
<div class="a" style="left:0px;top:1225.8px;width:2159px;height:32.5px;background:#aaaaaa;"></div>
<div class="a" style="left:16.2px;top:1225.3px;width:1px;height:33px;background:#8f8f8f;"></div>
<div class="a" style="left:84px;top:1228.3px;width:368px;height:27.4px;background:#a3a5a6;border:1px solid #9a9c9c;box-sizing:border-box;"></div>
<div class="a t" id="t122" style="top:1234.00px;font-size:17px;line-height:17px;font-weight:bold;color:#000;left:88.3px;transform:scaleX(1.0221);transform-origin:0 0;">Запис 18 із 22</div>
<div class="a" style="left:0px;top:1258.3px;width:2159px;height:1.3px;background:#8c8c8c;"></div>
<div class="a" style="left:0px;top:1259.6px;width:2159px;height:24px;background:#a9a9a9;"></div>
<svg class="a" style="left:6px;top:1265px" width="12" height="14" viewBox="0 0 12 14"><path d="M8.5 2.5 L4 7 L8.5 11.5" fill="none" stroke="#333" stroke-width="2.2"/></svg>
<div class="a" style="left:25.7px;top:1261px;width:361px;height:22px;background:#919191;"></div>
<svg class="a" style="left:2140px;top:1265px" width="12" height="14" viewBox="0 0 12 14"><path d="M3.5 2.5 L8 7 L3.5 11.5" fill="none" stroke="#333" stroke-width="2.2"/></svg>
<div class="a" style="left:0px;top:1283.6px;width:2159px;height:68px;background:#aaaaaa;"></div>
<div class="a" style="left:5.7px;top:1288.3px;width:19.3px;height:18.4px;border:1.5px solid #3c3c3c;box-sizing:border-box;"></div>
<div class="a t" id="t123" style="top:1291.00px;font-size:17.5px;line-height:17.5px;font-weight:normal;color:#1e1e1e;left:29px;transform:scaleX(0.9691);transform-origin:0 0;">Показувати деталі</div>
<div class="a" style="left:4.3px;top:1314px;width:187.4px;height:33.3px;background:#aaaaaa;border:2px solid #141414;box-sizing:border-box;"></div>
<div class="a t" id="t124" style="top:1322.00px;font-size:18px;line-height:18px;font-weight:normal;color:#1e1e1e;left:9.5px;transform:scaleX(0.8919);transform-origin:0 0;">Головна</div>
<div class="a" style="left:195px;top:1314px;width:187.3px;height:33.3px;background:#b59377;border:2px solid #2a6fb0;box-sizing:border-box;"></div>
<div class="a t" id="t125" style="top:1322.00px;font-size:18px;line-height:18px;font-weight:normal;color:#1e1e1e;left:199px;transform:scaleX(0.9187);transform-origin:0 0;">Товар</div>
<div class="a" style="left:0px;top:1351.7px;width:2159px;height:1.2px;background:#9a9a9a;"></div>
<div class="a" style="left:0px;top:1352.9px;width:2159px;height:28px;background:#aaaaaa;"></div>
<svg class="a" style="left:4px;top:1357px" width="19" height="20" viewBox="0 0 19 20"><path d="M1 3 L4 0.5 H18 V17 L15 19.5 H1 Z" fill="#7f86a0"/><path d="M1 3 H15 V19.5 H1 Z" fill="#9aa0b4"/><path d="M15 3 L18 0.5 V17 L15 19.5 Z" fill="#5c6480"/><g stroke="#3f78c0" stroke-width="1.6"><path d="M1.5 6.5 H14.5 M1.5 10 H14.5 M1.5 13.5 H14.5 M1.5 17 H14.5"/></g></svg>
<div class="a t" id="t126" style="top:1359.00px;font-size:17.5px;line-height:17.5px;font-weight:normal;color:#1e1e1e;left:30px;transform:scaleX(0.9387);transform-origin:0 0;">База даних: TASA3@TITAN</div>
<div class="a" style="left:297.3px;top:1355px;width:1px;height:25px;background:#959595;"></div>
<svg class="a" style="left:303px;top:1357px" width="17" height="20" viewBox="0 0 17 20"><path d="M1.5 20 Q1.5 12.5 8.5 12.5 Q15.5 12.5 15.5 20 Z" fill="#7a78b0"/><path d="M6 13 L8.5 16 L11 13 Z" fill="#c08060"/><circle cx="8.5" cy="7.5" r="4.3" fill="#9aa0c8"/><path d="M3.2 7 Q3.5 1 8.5 1 Q13.5 1 13.8 6 L12 4.8 Q8 2.8 5 6 Z" fill="#c0503a"/></svg>
<div class="a t" id="t127" style="top:1359.00px;font-size:17.5px;line-height:17.5px;font-weight:normal;color:#1e1e1e;left:328.3px;transform:scaleX(0.9206);transform-origin:0 0;">Користувач: GIFT</div>
<div class="a" style="left:602.7px;top:1355px;width:1px;height:25px;background:#959595;"></div>
<svg class="a" style="left:607px;top:1355px" width="21" height="23" viewBox="0 0 21 23"><path d="M2 8 L5 4.5 H14 L19.5 9 V17.5 H2 Z" fill="#6c6ca4"/><path d="M5 4.5 H14 L12 7 H3 Z" fill="#8c8cbc"/><path d="M15 1 L17 5" stroke="#333" stroke-width="0.8"/><path d="M2.5 21 L6 11 M9.5 22 L12.5 13" stroke="#c8a030" stroke-width="2.6"/></svg>
<div class="a t" id="t128" style="top:1359.00px;font-size:17.5px;line-height:17.5px;font-weight:normal;color:#1e1e1e;left:635px;transform:scaleX(0.9246);transform-origin:0 0;">3</div>
<div class="a" style="left:661.7px;top:1355px;width:1px;height:25px;background:#959595;"></div>
<div class="a t" id="t129" style="top:1359.00px;font-size:17.5px;line-height:17.5px;font-weight:normal;color:#1e1e1e;left:665.7px;transform:scaleX(0.9481);transform-origin:0 0;">Кассовый аппарат не подключен</div>
<div class="a" style="left:1118.3px;top:1355px;width:1px;height:25px;background:#959595;"></div>
<div class="a t" id="t130" style="top:1359.00px;font-size:17.5px;line-height:17.5px;font-weight:normal;color:#1e1e1e;left:1122.7px;transform:scaleX(0.9245);transform-origin:0 0;">Зона: Склад [1]</div>
<div class="a" style="left:1648.2px;top:219px;width:3px;height:968px;background:#a8a8a8;"></div>
<div class="a" style="left:447.0px;top:180.0px;width:1201.2px;height:1011.0px;background:#f0f0f0;"></div>
<div class="a" style="left:447.0px;top:180.0px;width:1204.0px;height:1.3px;background:#3c3c3c;"></div>
<div class="a" style="left:447.0px;top:180.0px;width:1.3px;height:1007.0px;background:#3c3c3c;"></div>
<div class="a" style="left:1648.2px;top:180.0px;width:2.8px;height:39.0px;background:#3c3c3c;"></div>
<div class="a" style="left:448.3px;top:181.3px;width:1199.9px;height:38.10000000000001px;background:#ffffff;"></div>
<div class="a" style="left:448.3px;top:219.4px;width:1069.1000000000001px;height:30.799999999999983px;background:#ffffff;"></div>
<div class="a" style="left:448.3px;top:1187px;width:1199.9px;height:4px;background:#ffffff;"></div>
<div class="a t" id="t131" style="top:192.00px;font-size:18.4px;line-height:18.4px;font-weight:normal;color:#000;left:453.5px;transform:scaleX(0.9632);transform-origin:0 0;">Товар (новий запис)</div>
<svg class="a" style="left:1617px;top:191px" width="17" height="17" viewBox="0 0 17 17"><path d="M1 1 L16 16 M16 1 L1 16" stroke="#111" stroke-width="1.3"/></svg>
<div class="a" style="left:448.3px;top:250.2px;width:1069.1000000000001px;height:2.1px;background:#1e1e1e;"></div>
<div class="a" style="left:455.7px;top:222.2px;width:80.80000000000001px;height:30.100000000000023px;background:#f0f0f0;"></div>
<div class="a" style="left:455.7px;top:222.2px;width:1.5px;height:30.100000000000023px;background:#1e1e1e;"></div>
<div class="a" style="left:455.7px;top:222.2px;width:80.80000000000001px;height:1.5px;background:#1e1e1e;"></div>
<div class="a" style="left:535.0px;top:222.2px;width:1.5px;height:30.100000000000023px;background:#1e1e1e;"></div>
<div class="a" style="left:457.2px;top:250.2px;width:77.80000000000001px;height:2.1px;background:#f0f0f0;"></div>
<div class="a t" id="t132" style="top:230.00px;font-size:17.4px;line-height:17.4px;font-weight:normal;color:#202030;left:462.6px;transform:scaleX(0.9696);transform-origin:0 0;">Загальні</div>
<div class="a t" id="t133" style="top:230.00px;font-size:17.4px;line-height:17.4px;font-weight:normal;color:#202030;left:541px;transform:scaleX(0.9308);transform-origin:0 0;">Класифікація</div>
<div class="a t" id="t134" style="top:230.00px;font-size:17.4px;line-height:17.4px;font-weight:normal;color:#202030;left:655px;transform:scaleX(0.9432);transform-origin:0 0;">Ціни</div>
<div class="a t" id="t135" style="top:230.00px;font-size:17.4px;line-height:17.4px;font-weight:normal;color:#202030;left:703.8px;transform:scaleX(0.9274);transform-origin:0 0;">Зображення</div>
<div class="a t" id="t136" style="top:230.00px;font-size:17.4px;line-height:17.4px;font-weight:normal;color:#202030;left:812px;transform:scaleX(0.9899);transform-origin:0 0;">Додатково</div>
<div class="a t" id="t137" style="top:230.00px;font-size:17.4px;line-height:17.4px;font-weight:normal;color:#202030;left:911.6px;transform:scaleX(0.9096);transform-origin:0 0;">Бонуси</div>
<div class="a t" id="t138" style="top:230.00px;font-size:17.4px;line-height:17.4px;font-weight:normal;color:#202030;left:979.6px;transform:scaleX(0.9522);transform-origin:0 0;">Історія коду Моріона</div>
<div class="a" style="left:648.3px;top:227px;width:1.2px;height:22px;background:#a0a0a0;"></div>
<div class="a" style="left:697.1px;top:227px;width:1.2px;height:22px;background:#a0a0a0;"></div>
<div class="a" style="left:805.3px;top:227px;width:1.2px;height:22px;background:#a0a0a0;"></div>
<div class="a" style="left:905.5px;top:227px;width:1.2px;height:22px;background:#a0a0a0;"></div>
<div class="a" style="left:973.1px;top:227px;width:1.2px;height:22px;background:#a0a0a0;"></div>
<div class="a" style="left:1537px;top:232.8px;width:106.2px;height:33.7px;background:#e1e1e1;border:2.4px solid #0078d7;box-sizing:border-box;"></div>
<div class="a t" id="t139" style="top:241.00px;font-size:17.4px;line-height:17.4px;font-weight:normal;color:#1a1a1a;left:1574.7px;transform:scaleX(1.0138);transform-origin:0 0;">Так</div>
<div class="a" style="left:1537px;top:280.5px;width:106.2px;height:34.3px;background:#e1e1e1;border:1.2px solid #adadad;box-sizing:border-box;"></div>
<div class="a t" id="t140" style="top:288.00px;font-size:17.4px;line-height:17.4px;font-weight:normal;color:#1a1a1a;left:1548.3px;transform:scaleX(0.9602);transform-origin:0 0;">Скасувати</div>
<div class="a" style="left:452.8px;top:269.1px;width:1059.6000000000001px;height:116.89999999999998px;border:1.2px solid #dcdcdc;box-sizing:border-box;"></div>
<div class="a t" id="t141" style="top:283.00px;font-size:17.4px;line-height:17.4px;font-weight:normal;color:#1a1a1a;left:470.4px;transform:scaleX(0.9291);transform-origin:0 0;">Повна назва:</div>
<div class="a" style="left:616.4px;top:276.7px;width:879.9px;height:31.6px;background:#f0f0f0;border:1.65px solid #3a3a3a;box-sizing:border-box;"></div>
<div class="a" style="left:616.4px;top:309.2px;width:879.9px;height:30.6px;background:#ffffff;border:1.65px solid #3a3a3a;box-sizing:border-box;"></div>
<div class="a t" id="t142" style="top:316.00px;font-size:17.4px;line-height:17.4px;font-weight:normal;color:#1a1a1a;left:528.6px;transform:scaleX(0.9204);transform-origin:0 0;">Назва:</div>
<svg class="a" style="left:605.7px;top:312.6px" width="9" height="8" viewBox="0 0 9 8"><path d="M4.5 0.5 V7.5 M1 2 L8 6 M8 2 L1 6" stroke="#f29a9a" stroke-width="1.2"/></svg>
<div class="a" style="left:621.2px;top:315px;width:1.3px;height:19.5px;background:#000;"></div>
<div class="a" style="left:507px;top:306.1px;width:995px;height:36.299999999999955px;border:4.2px solid #ff0000;box-sizing:border-box;border-radius:2px;"></div>
<div class="a t" id="t143" style="top:352.00px;font-size:17.4px;line-height:17.4px;font-weight:normal;color:#1a1a1a;left:483.6px;transform:scaleX(0.9530);transform-origin:0 0;">Форма випуску:</div>
<div class="a" style="left:616.4px;top:345.4px;width:608.6px;height:30.6px;background:#ffffff;border:1.65px solid #878787;box-sizing:border-box;"></div>
<div class="a t" id="t144" style="top:352.00px;font-size:17.4px;line-height:17.4px;font-weight:normal;color:#1a1a1a;left:1233.3px;transform:scaleX(0.9839);transform-origin:0 0;">К-ть в упаковці:</div>
<div class="a" style="left:1373.6px;top:345.4px;width:122.70000000000009px;height:30.6px;background:#ffffff;border:1.65px solid #878787;box-sizing:border-box;"></div>
<div class="a" style="left:453.9px;top:396.5px;width:531.7px;height:498.29999999999995px;border:1.2px solid #dcdcdc;box-sizing:border-box;"></div>
<div class="a t" id="t145" style="top:411.00px;font-size:17.4px;line-height:17.4px;font-weight:normal;color:#1a1a1a;left:481.4px;transform:scaleX(0.9419);transform-origin:0 0;">Виробник:</div>
<div class="a" style="left:616.5px;top:404.7px;width:360.8px;height:31.900000000000013px;background:#ffffff;border:1.65px solid #878787;box-sizing:border-box;"></div>
<div class="a" style="left:865.4px;top:408.0px;width:21.600000000000023px;height:24.600000000000023px;background:#e1e1e1;border:1px solid #adadad;box-sizing:border-box;"></div>
<div class="a" style="left:870.6px;top:419.2px;width:2.2px;height:2.2px;border-radius:50%;background:#222"></div>
<div class="a" style="left:875.1px;top:419.2px;width:2.2px;height:2.2px;border-radius:50%;background:#222"></div>
<div class="a" style="left:879.6px;top:419.2px;width:2.2px;height:2.2px;border-radius:50%;background:#222"></div>
<div class="a" style="left:890.4px;top:408.0px;width:83.30000000000007px;height:24.600000000000023px;background:#e1e1e1;border:1px solid #adadad;box-sizing:border-box;"></div>
<div class="a t" id="t146" style="top:412.00px;font-size:17.4px;line-height:17.4px;font-weight:normal;color:#1a1a1a;left:893.4px;transform:scaleX(1.0429);transform-origin:0 0;">Карточка</div>
<div class="a t" id="t147" style="top:446.00px;font-size:17.4px;line-height:17.4px;font-weight:normal;color:#1a1a1a;left:566.8px;transform:scaleX(0.9136);transform-origin:0 0;">ПДВ:</div>
<div class="a" style="left:616.5px;top:439.27px;width:360.8px;height:31.900000000000013px;background:#ffffff;border:1.65px solid #878787;box-sizing:border-box;"></div>
<svg class="a" style="left:956.5px;top:450.1px" width="14" height="10" viewBox="0 0 14 10"><path d="M1.5 2.5 L7 8 L12.5 2.5" fill="none" stroke="#333" stroke-width="1.5"/></svg>
<div class="a t" id="t148" style="top:481.00px;font-size:17.4px;line-height:17.4px;font-weight:normal;color:#1a1a1a;left:476.8px;transform:scaleX(0.9648);transform-origin:0 0;">Цінова група:</div>
<div class="a" style="left:616.5px;top:473.84px;width:360.8px;height:31.900000000000013px;background:#ffffff;border:1.65px solid #878787;box-sizing:border-box;"></div>
<svg class="a" style="left:956.5px;top:484.6px" width="14" height="10" viewBox="0 0 14 10"><path d="M1.5 2.5 L7 8 L12.5 2.5" fill="none" stroke="#333" stroke-width="1.5"/></svg>
<div class="a t" id="t149" style="top:515.00px;font-size:17.4px;line-height:17.4px;font-weight:normal;color:#1a1a1a;left:513px;transform:scaleX(0.9691);transform-origin:0 0;">Вид товару:</div>
<div class="a" style="left:616.5px;top:508.41px;width:360.8px;height:31.899999999999956px;background:#ffffff;border:1.65px solid #878787;box-sizing:border-box;"></div>
<svg class="a" style="left:956.5px;top:519.2px" width="14" height="10" viewBox="0 0 14 10"><path d="M1.5 2.5 L7 8 L12.5 2.5" fill="none" stroke="#333" stroke-width="1.5"/></svg>
<div class="a t" id="t150" style="top:550.00px;font-size:17.4px;line-height:17.4px;font-weight:normal;color:#1a1a1a;left:471.8px;transform:scaleX(0.9668);transform-origin:0 0;">Товарна група:</div>
<div class="a" style="left:616.5px;top:542.98px;width:360.8px;height:31.899999999999956px;background:#ffffff;border:1.65px solid #878787;box-sizing:border-box;"></div>
<svg class="a" style="left:956.5px;top:553.8px" width="14" height="10" viewBox="0 0 14 10"><path d="M1.5 2.5 L7 8 L12.5 2.5" fill="none" stroke="#333" stroke-width="1.5"/></svg>
<div class="a t" id="t151" style="top:584.00px;font-size:17.4px;line-height:17.4px;font-weight:normal;color:#1a1a1a;left:490.9px;transform:scaleX(0.9636);transform-origin:0 0;">Од.</div>
<div class="a" style="left:616.5px;top:577.5500000000001px;width:360.8px;height:31.899999999999956px;background:#ffffff;border:1.65px solid #878787;box-sizing:border-box;"></div>
<svg class="a" style="left:956.5px;top:588.4px" width="14" height="10" viewBox="0 0 14 10"><path d="M1.5 2.5 L7 8 L12.5 2.5" fill="none" stroke="#333" stroke-width="1.5"/></svg>
<div class="a t" id="t152" style="top:619.00px;font-size:17.4px;line-height:17.4px;font-weight:normal;color:#1a1a1a;left:461.6px;transform:scaleX(0.9366);transform-origin:0 0;">Умови зберігання:</div>
<div class="a" style="left:616.5px;top:612.1200000000001px;width:360.8px;height:31.899999999999956px;background:#ffffff;border:1.65px solid #878787;box-sizing:border-box;"></div>
<svg class="a" style="left:956.5px;top:622.9px" width="14" height="10" viewBox="0 0 14 10"><path d="M1.5 2.5 L7 8 L12.5 2.5" fill="none" stroke="#333" stroke-width="1.5"/></svg>
<div class="a t" id="t153" style="top:653.00px;font-size:17.4px;line-height:17.4px;font-weight:normal;color:#1a1a1a;left:474.3px;transform:scaleX(0.9282);transform-origin:0 0;">Світловий режим:</div>
<div class="a" style="left:616.5px;top:646.69px;width:360.8px;height:31.899999999999956px;background:#ffffff;border:1.65px solid #878787;box-sizing:border-box;"></div>
<div class="a t" id="t154" style="top:688.00px;font-size:17.4px;line-height:17.4px;font-weight:normal;color:#1a1a1a;left:536px;transform:scaleX(0.9156);transform-origin:0 0;">УКТ ЗЕД:</div>
<div class="a" style="left:616.5px;top:681.26px;width:360.8px;height:31.899999999999956px;background:#ffffff;border:1.65px solid #878787;box-sizing:border-box;"></div>
<div class="a t" id="t155" style="top:723.00px;font-size:17.4px;line-height:17.4px;font-weight:normal;color:#1a1a1a;left:470.5px;transform:scaleX(0.9446);transform-origin:0 0;">Глав.</div>
<div class="a" style="left:616.5px;top:715.83px;width:360.8px;height:31.899999999999956px;background:#ffffff;border:1.65px solid #878787;box-sizing:border-box;"></div>
<div class="a" style="left:926.5px;top:718.63px;width:22.200000000000045px;height:24.799999999999955px;background:#e1e1e1;border:1px solid #adadad;box-sizing:border-box;"></div>
<div class="a" style="left:932.0px;top:729.9px;width:2.2px;height:2.2px;border-radius:50%;background:#222"></div>
<div class="a" style="left:936.5px;top:729.9px;width:2.2px;height:2.2px;border-radius:50%;background:#222"></div>
<div class="a" style="left:941.0px;top:729.9px;width:2.2px;height:2.2px;border-radius:50%;background:#222"></div>
<div class="a" style="left:952px;top:718.63px;width:22px;height:24.799999999999955px;background:#e1e1e1;border:1px solid #adadad;box-sizing:border-box;"></div>
<div class="a t" id="t156" style="top:724.00px;font-size:17.4px;line-height:17.4px;font-weight:normal;color:#1a1a1a;left:956.4px;transform:scaleX(0.8269);transform-origin:0 0;">X</div>
<div class="a t" id="t157" style="top:757.00px;font-size:17.4px;line-height:17.4px;font-weight:normal;color:#1a1a1a;left:561px;transform:scaleX(0.9596);transform-origin:0 0;">Колір:</div>
<div class="a" style="left:616.5px;top:750.4000000000001px;width:360.8px;height:31.899999999999956px;background:#ffffff;border:1.65px solid #878787;box-sizing:border-box;"></div>
<div class="a" style="left:926.5px;top:753.2px;width:22.200000000000045px;height:24.799999999999955px;background:#e1e1e1;border:1px solid #adadad;box-sizing:border-box;"></div>
<div class="a" style="left:932.0px;top:764.5px;width:2.2px;height:2.2px;border-radius:50%;background:#222"></div>
<div class="a" style="left:936.5px;top:764.5px;width:2.2px;height:2.2px;border-radius:50%;background:#222"></div>
<div class="a" style="left:941.0px;top:764.5px;width:2.2px;height:2.2px;border-radius:50%;background:#222"></div>
<div class="a" style="left:952px;top:753.2px;width:22px;height:24.799999999999955px;background:#e1e1e1;border:1px solid #adadad;box-sizing:border-box;"></div>
<div class="a t" id="t158" style="top:759.00px;font-size:17.4px;line-height:17.4px;font-weight:normal;color:#1a1a1a;left:956.4px;transform:scaleX(0.8269);transform-origin:0 0;">X</div>
<div class="a t" id="t159" style="top:792.00px;font-size:17.4px;line-height:17.4px;font-weight:normal;color:#1a1a1a;left:547.4px;transform:scaleX(0.8975);transform-origin:0 0;">Розмір:</div>
<div class="a" style="left:616.5px;top:784.97px;width:360.8px;height:31.899999999999956px;background:#ffffff;border:1.65px solid #878787;box-sizing:border-box;"></div>
<div class="a" style="left:926.5px;top:787.77px;width:22.200000000000045px;height:24.799999999999955px;background:#e1e1e1;border:1px solid #adadad;box-sizing:border-box;"></div>
<div class="a" style="left:932.0px;top:799.1px;width:2.2px;height:2.2px;border-radius:50%;background:#222"></div>
<div class="a" style="left:936.5px;top:799.1px;width:2.2px;height:2.2px;border-radius:50%;background:#222"></div>
<div class="a" style="left:941.0px;top:799.1px;width:2.2px;height:2.2px;border-radius:50%;background:#222"></div>
<div class="a" style="left:952px;top:787.77px;width:22px;height:24.799999999999955px;background:#e1e1e1;border:1px solid #adadad;box-sizing:border-box;"></div>
<div class="a t" id="t160" style="top:794.00px;font-size:17.4px;line-height:17.4px;font-weight:normal;color:#1a1a1a;left:956.4px;transform:scaleX(0.8269);transform-origin:0 0;">X</div>
<div class="a t" id="t161" style="top:826.00px;font-size:17.4px;line-height:17.4px;font-weight:normal;color:#1a1a1a;left:546.1px;transform:scaleX(0.9769);transform-origin:0 0;">Склад:</div>
<div class="a" style="left:616.5px;top:819.5400000000001px;width:360.8px;height:31.899999999999956px;background:#ffffff;border:1.65px solid #878787;box-sizing:border-box;"></div>
<div class="a" style="left:926.5px;top:822.34px;width:22.200000000000045px;height:24.799999999999955px;background:#e1e1e1;border:1px solid #adadad;box-sizing:border-box;"></div>
<div class="a" style="left:932.0px;top:833.6px;width:2.2px;height:2.2px;border-radius:50%;background:#222"></div>
<div class="a" style="left:936.5px;top:833.6px;width:2.2px;height:2.2px;border-radius:50%;background:#222"></div>
<div class="a" style="left:941.0px;top:833.6px;width:2.2px;height:2.2px;border-radius:50%;background:#222"></div>
<div class="a" style="left:952px;top:822.34px;width:22px;height:24.799999999999955px;background:#e1e1e1;border:1px solid #adadad;box-sizing:border-box;"></div>
<div class="a t" id="t162" style="top:828.00px;font-size:17.4px;line-height:17.4px;font-weight:normal;color:#1a1a1a;left:956.4px;transform:scaleX(0.8269);transform-origin:0 0;">X</div>
<div class="a t" id="t163" style="top:862.00px;font-size:17.4px;line-height:17.4px;font-weight:normal;color:#1a1a1a;left:484.5px;transform:scaleX(0.9648);transform-origin:0 0;">Рецептурність:</div>
<div class="a" style="left:616.5px;top:855.7px;width:360.8px;height:31.899999999999956px;background:#ffffff;border:1.65px solid #878787;box-sizing:border-box;"></div>
<svg class="a" style="left:956.5px;top:866.5px" width="14" height="10" viewBox="0 0 14 10"><path d="M1.5 2.5 L7 8 L12.5 2.5" fill="none" stroke="#333" stroke-width="1.5"/></svg>
<svg class="a" style="left:605.8px;top:408.6px" width="9" height="8" viewBox="0 0 9 8"><path d="M4.5 0.5 V7.5 M1 2 L8 6 M8 2 L1 6" stroke="#f29a9a" stroke-width="1.2"/></svg>
<svg class="a" style="left:605.8px;top:442.8px" width="9" height="8" viewBox="0 0 9 8"><path d="M4.5 0.5 V7.5 M1 2 L8 6 M8 2 L1 6" stroke="#f29a9a" stroke-width="1.2"/></svg>
<svg class="a" style="left:605.8px;top:477.6px" width="9" height="8" viewBox="0 0 9 8"><path d="M4.5 0.5 V7.5 M1 2 L8 6 M8 2 L1 6" stroke="#f29a9a" stroke-width="1.2"/></svg>
<div class="a" style="left:453.2px;top:910.4px;width:532.4000000000001px;height:84.60000000000002px;border:1.2px solid #dcdcdc;box-sizing:border-box;"></div>
<div class="a t" id="t164" style="top:903.00px;font-size:17.4px;line-height:17.4px;font-weight:normal;color:#1a1a1a;left:464px;transform:scaleX(0.9640);transform-origin:0 0;background:#f0f0f0;padding:0 2px;margin-left:-2px;">Діюча речовина</div>
<div class="a t" id="t165" style="top:930.00px;font-size:17.4px;line-height:17.4px;font-weight:normal;color:#1a1a1a;left:566px;transform:scaleX(0.9001);transform-origin:0 0;">МНН:</div>
<div class="a" style="left:616.5px;top:919.0px;width:360.8px;height:30.6px;background:#ffffff;border:1.65px solid #878787;box-sizing:border-box;"></div>
<div class="a" style="left:926.5px;top:921.8px;width:22.200000000000045px;height:24.800000000000068px;background:#e1e1e1;border:1px solid #adadad;box-sizing:border-box;"></div>
<div class="a" style="left:932.0px;top:933.1px;width:2.2px;height:2.2px;border-radius:50%;background:#222"></div>
<div class="a" style="left:936.5px;top:933.1px;width:2.2px;height:2.2px;border-radius:50%;background:#222"></div>
<div class="a" style="left:941.0px;top:933.1px;width:2.2px;height:2.2px;border-radius:50%;background:#222"></div>
<div class="a" style="left:952px;top:921.8px;width:22px;height:24.800000000000068px;background:#e1e1e1;border:1px solid #adadad;box-sizing:border-box;"></div>
<div class="a t" id="t166" style="top:928.00px;font-size:17.4px;line-height:17.4px;font-weight:normal;color:#1a1a1a;left:956.4px;transform:scaleX(0.8269);transform-origin:0 0;">X</div>
<div class="a t" id="t167" style="top:960.00px;font-size:17.4px;line-height:17.4px;font-weight:normal;color:#1a1a1a;left:535px;transform:scaleX(0.9634);transform-origin:0 0;">Код АТС:</div>
<div class="a" style="left:616.5px;top:953.4000000000001px;width:360.8px;height:30.69999999999991px;background:#f0f0f0;border:1.65px solid #878787;box-sizing:border-box;"></div>
<div class="a t" id="t168" style="top:1019.00px;font-size:17.4px;line-height:17.4px;font-weight:normal;color:#1a1a1a;left:536px;transform:scaleX(0.9394);transform-origin:0 0;">Звірено:</div>
<div class="a" style="left:616.5px;top:1012.0px;width:360.8px;height:30.700000000000138px;background:#ffffff;border:1.65px solid #878787;box-sizing:border-box;"></div>
<div class="a" style="left:874.3px;top:1014.8px;width:74.40000000000009px;height:24.700000000000045px;background:#e1e1e1;border:1px solid #adadad;box-sizing:border-box;"></div>
<div class="a t" id="t169" style="top:1020.00px;font-size:17.4px;line-height:17.4px;font-weight:normal;color:#1a1a1a;left:877.5px;transform:scaleX(0.9603);transform-origin:0 0;">Сверить</div>
<div class="a" style="left:952px;top:1014.8px;width:22px;height:24.700000000000045px;background:#e1e1e1;border:1px solid #adadad;box-sizing:border-box;"></div>
<div class="a t" id="t170" style="top:1020.00px;font-size:17.4px;line-height:17.4px;font-weight:normal;color:#1a1a1a;left:956.4px;transform:scaleX(0.8269);transform-origin:0 0;">X</div>
<div class="a t" id="t171" style="top:1063.00px;font-size:17.4px;line-height:17.4px;font-weight:normal;color:#1a1a1a;left:455.2px;transform:scaleX(0.9210);transform-origin:0 0;">Примітка:</div>
<div class="a" style="left:455.7px;top:1080.4px;width:1187.6px;height:30.69999999999991px;background:#ffffff;border:1.65px solid #878787;box-sizing:border-box;"></div>
<div class="a" style="left:455.7px;top:1121.7px;width:1187.3px;height:55.700000000000045px;border:1.2px solid #dcdcdc;box-sizing:border-box;"></div>
<div class="a t" id="t172" style="top:1114.00px;font-size:17.4px;line-height:17.4px;font-weight:normal;color:#1a1a1a;left:467.4px;transform:scaleX(0.9417);transform-origin:0 0;background:#f0f0f0;padding:0 2px;margin-left:-2px;">Запис створено:</div>
<div class="a t" id="t173" style="top:1143.00px;font-size:17.4px;line-height:17.4px;font-weight:normal;color:#1a1a1a;left:467.4px;transform:scaleX(0.9732);transform-origin:0 0;">Автор:</div>
<div class="a" style="left:523.2px;top:1136.1000000000001px;width:164.59999999999997px;height:31.19999999999991px;background:#ffffff;border:1.65px solid #5e5e5e;box-sizing:border-box;"></div>
<div class="a t" id="t174" style="top:1143.00px;font-size:17.4px;line-height:17.4px;font-weight:normal;color:#1a1a1a;left:526.5px;transform:scaleX(0.9089);transform-origin:0 0;">GIFT</div>
<div class="a t" id="t175" style="top:1143.00px;font-size:17.4px;line-height:17.4px;font-weight:normal;color:#1a1a1a;left:698.5px;transform:scaleX(0.9921);transform-origin:0 0;">Дата:</div>
<div class="a" style="left:748.2px;top:1136.1000000000001px;width:188.8px;height:31.19999999999991px;background:#ffffff;border:1.65px solid #cfcfcf;box-sizing:border-box;"></div>
<div class="a t" id="t176" style="top:1143.00px;font-size:17.4px;line-height:17.4px;font-weight:normal;color:#1a1a1a;left:752px;transform:scaleX(0.9650);transform-origin:0 0;">02.01.2025 13:02:29</div>
<div class="a" style="left:993px;top:396.8px;width:519px;height:58.0px;border:1.2px solid #dcdcdc;box-sizing:border-box;"></div>
<div class="a t" id="t177" style="top:390.00px;font-size:17.4px;line-height:17.4px;font-weight:normal;color:#1a1a1a;left:1003.6px;transform:scaleX(0.9434);transform-origin:0 0;background:#f0f0f0;padding:0 2px;margin-left:-2px;">Корпорація</div>
<div class="a" style="left:997.4px;top:414.4px;width:498.90000000000003px;height:30.900000000000013px;background:#ffffff;border:1.65px solid #878787;box-sizing:border-box;"></div>
<div class="a" style="left:1471px;top:417.7px;width:22px;height:24.30000000000001px;background:#e1e1e1;border:1px solid #adadad;box-sizing:border-box;"></div>
<div class="a" style="left:1476.4px;top:428.8px;width:2.2px;height:2.2px;border-radius:50%;background:#222"></div>
<div class="a" style="left:1480.9px;top:428.8px;width:2.2px;height:2.2px;border-radius:50%;background:#222"></div>
<div class="a" style="left:1485.4px;top:428.8px;width:2.2px;height:2.2px;border-radius:50%;background:#222"></div>
<div class="a" style="left:993px;top:470.4px;width:324px;height:49.60000000000002px;border:1.2px solid #dcdcdc;box-sizing:border-box;"></div>
<div class="a t" id="t178" style="top:463.00px;font-size:17.4px;line-height:17.4px;font-weight:normal;color:#1a1a1a;left:1003.6px;transform:scaleX(0.9467);transform-origin:0 0;background:#f0f0f0;padding:0 2px;margin-left:-2px;">Внутрішній штрих-код</div>
<div class="a" style="left:997.4px;top:481.7px;width:308.8000000000001px;height:31.200000000000024px;background:#ffffff;border:1.65px solid #878787;box-sizing:border-box;"></div>
<div class="a" style="left:1324.5px;top:470.4px;width:187.5px;height:49.60000000000002px;border:1.2px solid #dcdcdc;box-sizing:border-box;"></div>
<div class="a t" id="t179" style="top:463.00px;font-size:17.4px;line-height:17.4px;font-weight:normal;color:#1a1a1a;left:1335px;transform:scaleX(0.9227);transform-origin:0 0;background:#f0f0f0;padding:0 2px;margin-left:-2px;">Спосіб обліку</div>
<svg class="a" style="left:1335.5px;top:493px" width="20" height="20" viewBox="0 0 20 20"><circle cx="10" cy="10" r="8.8" fill="#fff" stroke="#333" stroke-width="1.4"/><circle cx="10" cy="10" r="4.6" fill="#222"/></svg>
<div class="a t" id="t180" style="top:495.00px;font-size:17.4px;line-height:17.4px;font-weight:normal;color:#1a1a1a;left:1359px;transform:scaleX(0.9297);transform-origin:0 0;">Товар</div>
<svg class="a" style="left:1422.2px;top:493px" width="20" height="20" viewBox="0 0 20 20"><circle cx="10" cy="10" r="8.8" fill="#fff" stroke="#333" stroke-width="1.4"/></svg>
<div class="a t" id="t181" style="top:495.00px;font-size:17.4px;line-height:17.4px;font-weight:normal;color:#1a1a1a;left:1445.9px;transform:scaleX(0.9425);transform-origin:0 0;">Послуги</div>
<div class="a" style="left:993px;top:536.6px;width:519px;height:77.39999999999998px;border:1.2px solid #dcdcdc;box-sizing:border-box;"></div>
<div class="a t" id="t182" style="top:551.00px;font-size:17.4px;line-height:17.4px;font-weight:normal;color:#1a1a1a;left:1021.7px;transform:scaleX(0.9427);transform-origin:0 0;">Код Моріона:</div>
<div class="a" style="left:1136.9px;top:543.2px;width:239.39999999999992px;height:30.899999999999956px;background:#ffffff;border:1.65px solid #878787;box-sizing:border-box;"></div>
<div class="a" style="left:1381px;top:545.3px;width:113.70000000000005px;height:27.200000000000045px;background:#e1e1e1;border:1px solid #adadad;box-sizing:border-box;"></div>
<div class="a t" id="t183" style="top:551.00px;font-size:17.4px;line-height:17.4px;font-weight:normal;color:#1a1a1a;left:1393px;transform:scaleX(0.9143);transform-origin:0 0;">Інформація</div>
<div class="a t" id="t184" style="top:584.00px;font-size:17.4px;line-height:17.4px;font-weight:normal;color:#1a1a1a;left:1000.4px;transform:scaleX(0.8932);transform-origin:0 0;">Всесвітнє ім'я:</div>
<div class="a" style="left:1135.4px;top:577.9000000000001px;width:360.8999999999999px;height:30.799999999999933px;background:#ffffff;border:1.65px solid #878787;box-sizing:border-box;"></div>
<div class="a" style="left:993px;top:626.8px;width:519px;height:81.80000000000007px;border:1.2px solid #dcdcdc;box-sizing:border-box;"></div>
<div class="a t" id="t185" style="top:620.00px;font-size:17.4px;line-height:17.4px;font-weight:normal;color:#1a1a1a;left:1003.6px;transform:scaleX(0.9472);transform-origin:0 0;background:#f0f0f0;padding:0 2px;margin-left:-2px;">Реєстрація товару</div>
<div class="a t" id="t186" style="top:643.00px;font-size:17.4px;line-height:17.4px;font-weight:normal;color:#1a1a1a;left:1075.4px;transform:scaleX(0.8908);transform-origin:0 0;">Номер:</div>
<div class="a" style="left:1136.9px;top:636.5px;width:359.3999999999999px;height:30.800000000000047px;background:#ffffff;border:1.65px solid #878787;box-sizing:border-box;"></div>
<div class="a t" id="t187" style="top:678.00px;font-size:17.4px;line-height:17.4px;font-weight:normal;color:#1a1a1a;left:1071.7px;transform:scaleX(0.9972);transform-origin:0 0;">Дата з:</div>
<div class="a" style="left:1136.9px;top:671.1px;width:119.19999999999986px;height:30.90000000000007px;background:#ffffff;border:1.65px solid #878787;box-sizing:border-box;"></div>
<svg class="a" style="left:1235.7px;top:681.5px" width="14" height="10" viewBox="0 0 14 10"><path d="M1.5 2.5 L7 8 L12.5 2.5" fill="none" stroke="#333" stroke-width="1.5"/></svg>
<div class="a t" id="t188" style="top:678.00px;font-size:17.4px;line-height:17.4px;font-weight:normal;color:#1a1a1a;left:1296.7px;transform:scaleX(0.9663);transform-origin:0 0;">Дата по:</div>
<div class="a" style="left:1376.5px;top:671.1px;width:119.8px;height:30.90000000000007px;background:#ffffff;border:1.65px solid #878787;box-sizing:border-box;"></div>
<svg class="a" style="left:1475.5px;top:681.5px" width="14" height="10" viewBox="0 0 14 10"><path d="M1.5 2.5 L7 8 L12.5 2.5" fill="none" stroke="#333" stroke-width="1.5"/></svg>
<div class="a" style="left:993px;top:721px;width:519px;height:86.70000000000005px;border:1.2px solid #dcdcdc;box-sizing:border-box;"></div>
<div class="a t" id="t189" style="top:714.00px;font-size:17.4px;line-height:17.4px;font-weight:normal;color:#1a1a1a;left:1004.3px;transform:scaleX(0.9382);transform-origin:0 0;background:#f0f0f0;padding:0 2px;margin-left:-2px;">Гігієнічний висновок</div>
<div class="a t" id="t190" style="top:741.00px;font-size:17.4px;line-height:17.4px;font-weight:normal;color:#1a1a1a;left:1072.2px;">Висновок</div>
<div class="a" style="left:1136.9px;top:734.1px;width:356.3999999999999px;height:30.300000000000047px;background:#ffffff;border:1.65px solid #878787;box-sizing:border-box;"></div>
<div class="a t" id="t191" style="top:776.00px;font-size:17.4px;line-height:17.4px;font-weight:normal;color:#1a1a1a;left:1071.7px;transform:scaleX(0.9972);transform-origin:0 0;">Дата з:</div>
<div class="a" style="left:1136.9px;top:768.7px;width:119.19999999999986px;height:30.399999999999956px;background:#ffffff;border:1.65px solid #878787;box-sizing:border-box;"></div>
<svg class="a" style="left:1235.7px;top:779.0px" width="14" height="10" viewBox="0 0 14 10"><path d="M1.5 2.5 L7 8 L12.5 2.5" fill="none" stroke="#333" stroke-width="1.5"/></svg>
<div class="a t" id="t192" style="top:776.00px;font-size:17.4px;line-height:17.4px;font-weight:normal;color:#1a1a1a;left:1296.7px;transform:scaleX(0.9663);transform-origin:0 0;">Дата по:</div>
<div class="a" style="left:1374px;top:768.7px;width:119.3px;height:30.399999999999956px;background:#ffffff;border:1.65px solid #878787;box-sizing:border-box;"></div>
<svg class="a" style="left:1473.0px;top:779.0px" width="14" height="10" viewBox="0 0 14 10"><path d="M1.5 2.5 L7 8 L12.5 2.5" fill="none" stroke="#333" stroke-width="1.5"/></svg>
<div class="a" style="left:993px;top:821.8px;width:519px;height:50.60000000000002px;border:1.2px solid #dcdcdc;box-sizing:border-box;"></div>
<div class="a t" id="t193" style="top:814.00px;font-size:17.4px;line-height:17.4px;font-weight:normal;color:#1a1a1a;left:1004.3px;transform:scaleX(0.9428);transform-origin:0 0;background:#f0f0f0;padding:0 2px;margin-left:-2px;">Температура зберігання</div>
<div class="a t" id="t194" style="top:842.00px;font-size:17.4px;line-height:17.4px;font-weight:normal;color:#1a1a1a;left:1086px;transform:scaleX(0.9568);transform-origin:0 0;">Мін.:</div>
<div class="a" style="left:1136.9px;top:835.7px;width:119.19999999999986px;height:30.99999999999998px;background:#ffffff;border:1.65px solid #878787;box-sizing:border-box;"></div>
<div class="a t" id="t195" style="top:842.00px;font-size:17.4px;line-height:17.4px;font-weight:normal;color:#1a1a1a;left:1314px;transform:scaleX(0.9499);transform-origin:0 0;">Макс.:</div>
<div class="a" style="left:1373.5px;top:835.7px;width:119.8px;height:30.99999999999998px;background:#ffffff;border:1.65px solid #878787;box-sizing:border-box;"></div>
<div class="a" style="left:993px;top:888.7px;width:519px;height:51.299999999999955px;border:1.2px solid #dcdcdc;box-sizing:border-box;"></div>
<div class="a" style="left:1001px;top:880px;width:213px;height:18px;background:#f0f0f0;"></div>
<div class="a" style="left:1003px;top:879.3px;width:19px;height:19px;background:#ffffff;border:1.6px solid #333333;box-sizing:border-box;"></div>
<div class="a t" id="t196" style="top:881.00px;font-size:17.4px;line-height:17.4px;font-weight:normal;color:#1a1a1a;left:1025.9px;transform:scaleX(0.9629);transform-origin:0 0;">Цінове регулювання</div>
<div class="a" style="left:1010.5px;top:909.6px;width:19px;height:19px;background:#f0f0f0;border:1.6px solid #cccccc;box-sizing:border-box;"></div>
<div class="a t" id="t197" style="top:912.00px;font-size:17.4px;line-height:17.4px;font-weight:normal;color:#a0a0a0;left:1033.3px;transform:scaleX(0.9182);transform-origin:0 0;">Національний список</div>
<div class="a" style="left:1240.2px;top:909.6px;width:19px;height:19px;background:#ffffff;border:1.6px solid #333333;box-sizing:border-box;"></div>
<div class="a t" id="t198" style="top:912.00px;font-size:17.4px;line-height:17.4px;font-weight:normal;color:#1a1a1a;left:1262.5px;transform:scaleX(0.9404);transform-origin:0 0;">Постанова 863</div>
<div class="a" style="left:993px;top:950.7px;width:519px;height:44.59999999999991px;border:1.2px solid #dcdcdc;box-sizing:border-box;"></div>
<div class="a" style="left:1010.5px;top:965.6px;width:19px;height:19px;background:#f0f0f0;border:1.6px solid #cccccc;box-sizing:border-box;"></div>
<div class="a t" id="t199" style="top:967.00px;font-size:17.4px;line-height:17.4px;font-weight:normal;color:#a0a0a0;left:1034px;transform:scaleX(0.9287);transform-origin:0 0;">Асортиментний план</div>
<div class="a" style="left:1222.4px;top:965.6px;width:19px;height:19px;background:#ffffff;border:1.6px solid #333333;box-sizing:border-box;"></div>
<div class="a t" id="t200" style="top:967.00px;font-size:17.4px;line-height:17.4px;font-weight:normal;color:#1a1a1a;left:1244.7px;transform:scaleX(0.9853);transform-origin:0 0;">Бюджет</div>
<div class="a" style="left:1334.9px;top:965.6px;width:19px;height:19px;background:#ffffff;border:1.6px solid #333333;box-sizing:border-box;"></div>
<div class="a t" id="t201" style="top:967.00px;font-size:17.4px;line-height:17.4px;font-weight:normal;color:#1a1a1a;left:1357.4px;transform:scaleX(0.9645);transform-origin:0 0;">Не використовувати</div>
<div class="a" style="left:1490.5px;top:960px;width:40px;height:30px;background:#f0f0f0;"></div>
<div class="a" style="left:1510.8px;top:960px;width:1.2px;height:30px;background:#dcdcdc;"></div>
</body></html>
